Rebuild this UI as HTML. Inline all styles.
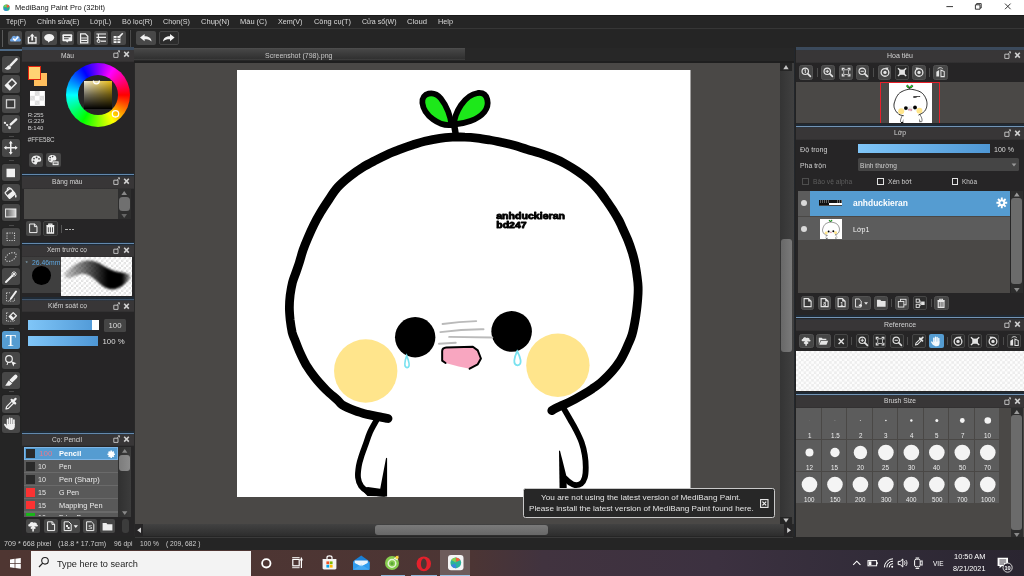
<!DOCTYPE html><html><head><meta charset="utf-8"><title>MediBang Paint Pro</title><style>
html,body{margin:0;padding:0;background:#252525;}
body{width:1024px;height:576px;overflow:hidden;position:relative;font-family:"Liberation Sans",sans-serif;}
div{position:absolute;box-sizing:border-box;}
.t{position:absolute;white-space:nowrap;line-height:1;font-family:"Liberation Sans",sans-serif;}
svg{position:absolute;left:0;top:0;overflow:visible;}
.btn{background:#4a4a4a;border-radius:2px;border:1px solid #3a3a3a;}
#root{left:0;top:0;width:1024px;height:576px;overflow:hidden;transform:translateZ(0);will-change:transform;background:#252525;}
</style></head><body><div id="root">
<div style="left:0px;top:0px;width:1024px;height:15px;background:#ffffff;"></div>
<svg style="left:2px;top:2.5px" width="11" height="11" viewBox="0 0 11 11"><circle cx="4.5" cy="4.7" r="3.3" fill="#27b08f"/><path d="M4.5,1.4 A3.3,3.3 0 0 1 7.6,3.6 L5,5 Z" fill="#ef5a3a"/><path d="M1.5,6 A3.3,3.3 0 0 0 5,8 L4.4,5.2 Z" fill="#3a86d9"/><path d="M1.6,3.2 A3.3,3.3 0 0 1 4.5,1.4 L4.5,4.6 Z" fill="#8ccf4c"/></svg>
<span class="t" style="left:15px;top:3.65px;font-size:7.5px;color:#111;transform-origin:0 0;transform:scaleX(0.9994);">MediBang Paint Pro (32bit)</span>
<svg style="left:940px;top:0px" width="84" height="15" viewBox="0 0 84 15"><path d="M6.4,6.6 H13" stroke="#222" stroke-width=".9"/><path d="M35.4,4.8 V9.2 H40 V4.8 Z M36.6,4.8 V3.6 H41.2 V8 H40" fill="none" stroke="#222" stroke-width=".9"/><path d="M65,3.6 L70.6,9.2 M70.6,3.6 L65,9.2" stroke="#222" stroke-width=".9"/></svg>
<div style="left:0px;top:14.7px;width:1024px;height:13.3px;background:#252525;border-top:1px solid #1a1a1a;"></div>
<span class="t" style="left:6px;top:17.8px;font-size:7.8px;color:#dadada;transform-origin:0 0;transform:scaleX(0.8547);">Tệp(F)</span>
<span class="t" style="left:36.5px;top:17.8px;font-size:7.8px;color:#dadada;transform-origin:0 0;transform:scaleX(0.9159);">Chỉnh sửa(E)</span>
<span class="t" style="left:90px;top:17.8px;font-size:7.8px;color:#dadada;transform-origin:0 0;transform:scaleX(0.9004);">Lớp(L)</span>
<span class="t" style="left:121.5px;top:17.8px;font-size:7.8px;color:#dadada;transform-origin:0 0;transform:scaleX(0.9383);">Bộ lọc(R)</span>
<span class="t" style="left:163px;top:17.8px;font-size:7.8px;color:#dadada;transform-origin:0 0;transform:scaleX(0.9296);">Chọn(S)</span>
<span class="t" style="left:200.5px;top:17.8px;font-size:7.8px;color:#dadada;transform-origin:0 0;transform:scaleX(0.9669);">Chụp(N)</span>
<span class="t" style="left:240px;top:17.8px;font-size:7.8px;color:#dadada;transform-origin:0 0;transform:scaleX(0.9586);">Màu (C)</span>
<span class="t" style="left:278px;top:17.8px;font-size:7.8px;color:#dadada;transform-origin:0 0;transform:scaleX(0.9268);">Xem(V)</span>
<span class="t" style="left:313.5px;top:17.8px;font-size:7.8px;color:#dadada;transform-origin:0 0;transform:scaleX(0.9484);">Công cụ(T)</span>
<span class="t" style="left:361.5px;top:17.8px;font-size:7.8px;color:#dadada;transform-origin:0 0;transform:scaleX(0.9043);">Cửa sổ(W)</span>
<span class="t" style="left:406.5px;top:17.8px;font-size:7.8px;color:#dadada;transform-origin:0 0;transform:scaleX(0.9812);">Cloud</span>
<span class="t" style="left:437.5px;top:17.8px;font-size:7.8px;color:#dadada;transform-origin:0 0;transform:scaleX(0.9349);">Help</span>
<div style="left:0px;top:28px;width:1024px;height:20px;background:#252525;border-top:1px solid #363636;"></div>
<div style="left:2px;top:29.5px;width:1px;height:17.5px;background:#5a5a5a;"></div>
<div style="left:129px;top:29.5px;width:1px;height:17.5px;background:#1a1a1a;"></div>
<div style="left:130.4px;top:29.5px;width:1px;height:17.5px;background:#4a4a4a;"></div>
<div style="left:8.0px;top:30.8px;width:14.4px;height:14.5px;background:#484848;border-radius:2px;"></div>
<div style="left:25.2px;top:30.8px;width:14.4px;height:14.5px;background:#484848;border-radius:2px;"></div>
<div style="left:42.4px;top:30.8px;width:14.4px;height:14.5px;background:#484848;border-radius:2px;"></div>
<div style="left:59.6px;top:30.8px;width:14.4px;height:14.5px;background:#484848;border-radius:2px;"></div>
<div style="left:76.8px;top:30.8px;width:14.4px;height:14.5px;background:#484848;border-radius:2px;"></div>
<div style="left:94.0px;top:30.8px;width:14.4px;height:14.5px;background:#484848;border-radius:2px;"></div>
<div style="left:111.2px;top:30.8px;width:14.4px;height:14.5px;background:#484848;border-radius:2px;"></div>
<svg style="left:8.0px;top:30.8px" width="14.4" height="14.5" viewBox="0 0 14.4 14.5"><path d="M3.4,10.6 C1.6,10.4 1.6,7.6 3.6,7.4 C3.6,5 6.2,4 7.6,5.4 C9.4,3.8 12.2,5.2 11.6,7.4 C13.4,7.6 13.2,10.6 11.4,10.6 Z" fill="#6fa6e6"/><path d="M5.2,7.6 L7,9.4 L10.2,5.8" fill="none" stroke="#fff" stroke-width="1.5"/></svg>
<svg style="left:25.2px;top:30.8px" width="14.4" height="14.5" viewBox="0 0 14.4 14.5"><path d="M5,6.4 H3.4 V12 H11 V6.4 H9.4" fill="none" stroke="#f2f2f2" stroke-width="1.3"/><path d="M7.2,9.6 V4.4" stroke="#f2f2f2" stroke-width="1.8"/><path d="M4.8,5.4 L7.2,2.4 L9.6,5.4 Z" fill="#f2f2f2"/></svg>
<svg style="left:42.4px;top:30.8px" width="14.4" height="14.5" viewBox="0 0 14.4 14.5"><ellipse cx="7.2" cy="6.6" rx="5" ry="3.6" fill="#f2f2f2"/><path d="M5.6,9 L6.2,11.8 L8.6,9.4 Z" fill="#f2f2f2"/></svg>
<svg style="left:59.6px;top:30.8px" width="14.4" height="14.5" viewBox="0 0 14.4 14.5"><rect x="2.4" y="3.2" width="9.8" height="7" rx="1" fill="#f2f2f2"/><path d="M6,10 L7.2,11.8 L8.4,10 Z" fill="#f2f2f2"/><path d="M4,5.6 H10.6 M4,7.8 H8.6" stroke="#484848" stroke-width="1.1"/></svg>
<svg style="left:76.8px;top:30.8px" width="14.4" height="14.5" viewBox="0 0 14.4 14.5"><path d="M3.6,2.8 H8.4 L10.8,5.2 V11.8 H3.6 Z" fill="none" stroke="#f2f2f2" stroke-width="1.2"/><path d="M4.2,7 H10.2 M4.2,9.4 H10.2" stroke="#f2f2f2" stroke-width="1.1"/></svg>
<svg style="left:94.0px;top:30.8px" width="14.4" height="14.5" viewBox="0 0 14.4 14.5"><path d="M2.4,3 H12 M2.4,6.4 H12 M4.4,3 V9.4" stroke="#f2f2f2" stroke-width="1.1" fill="none"/><circle cx="4.6" cy="10" r="1.5" fill="none" stroke="#f2f2f2" stroke-width="1"/><path d="M7,10.2 H12" stroke="#f2f2f2" stroke-width="1.2"/></svg>
<svg style="left:111.2px;top:30.8px" width="14.4" height="14.5" viewBox="0 0 14.4 14.5"><path d="M2.6,5 H9.4 V12 H2.6 Z" fill="#f2f2f2"/><path d="M2.6,7.4 H9.4 M2.6,9.7 H9.4 M6,5 V12" stroke="#484848" stroke-width=".8"/><path d="M8.6,5.4 L11.8,2.2" stroke="#f2f2f2" stroke-width="1.5"/><path d="M10.2,6.2 H11.4 V12 H10" stroke="#f2f2f2" stroke-width="0" fill="none"/></svg>
<div style="left:136.3px;top:30.8px;width:19.4px;height:14.7px;background:#484848;border-radius:2px;"></div>
<div style="left:159.2px;top:30.8px;width:19.5px;height:14.7px;background:#2c2c2c;border-radius:2px;border:1px solid #454545;"></div>
<svg style="left:136.3px;top:30.8px" width="19.4" height="14.7" viewBox="0 0 19.4 14.7"><path d="M4,6.6 L8.6,3 V5.2 C12.4,5.2 15.4,7 15.6,10.6 C14,8.6 12,8.2 8.6,8.2 V10.2 Z" fill="#f2f2f2"/></svg>
<svg style="left:159.2px;top:30.8px" width="19.5" height="14.7" viewBox="0 0 19.5 14.7"><path d="M15.6,6.6 L11,3 V5.2 C7.2,5.2 4.2,7 4,10.6 C5.6,8.6 7.6,8.2 11,8.2 V10.2 Z" fill="#f2f2f2"/></svg>
<svg width="0" height="0"><defs><symbol id="art" viewBox="237 70 454 427" preserveAspectRatio="none"><rect x="237" y="70" width="454" height="427" fill="#fff"/><circle cx="365.8" cy="371" r="31.7" fill="#ffe58c"/><circle cx="558.1" cy="365.2" r="31.7" fill="#ffe58c"/><path d="M388.1,418.5 C386.8,418.2 383.4,417.6 380.0,416.9 C376.6,416.2 371.7,415.4 367.5,414.4 C363.3,413.3 359.2,412.2 355.0,410.6 C350.8,409.0 345.4,406.8 342.5,405.0 C339.6,403.2 340.2,402.5 337.5,400.0 C334.8,397.5 330.0,393.8 326.2,390.0 C322.5,386.2 318.3,381.7 315.0,377.5 C311.7,373.3 308.8,369.2 306.2,365.0 C303.8,360.8 301.9,356.7 300.0,352.5 C298.1,348.3 296.3,343.3 295.0,340.0 C293.7,336.7 293.0,335.8 292.2,332.5 C291.5,329.2 290.7,324.2 290.2,320.0 C289.8,315.8 289.4,311.7 289.4,307.5 C289.4,303.3 289.7,299.2 290.2,295.0 C290.8,290.8 291.5,286.5 292.5,282.5 C293.5,278.5 295.4,274.3 296.5,271.0 C297.6,267.7 298.3,266.0 299.4,262.5 C300.5,259.0 301.7,254.2 303.1,250.0 C304.6,245.8 306.3,241.7 308.1,237.5 C309.9,233.3 311.7,229.2 313.8,225.0 C315.8,220.8 318.2,216.5 320.6,212.5 C323.0,208.5 325.2,205.2 328.0,201.0 C330.8,196.8 333.8,191.6 337.5,187.5 C341.2,183.4 345.8,179.5 350.0,176.2 C354.2,172.9 358.3,170.1 362.5,167.5 C366.7,164.9 370.8,162.8 375.0,160.6 C379.2,158.4 383.3,156.3 387.5,154.4 C391.7,152.5 395.8,151.0 400.0,149.4 C404.2,147.8 408.3,146.3 412.5,145.0 C416.7,143.7 420.4,142.4 425.0,141.3 C429.6,140.2 435.4,139.0 440.0,138.3 C444.6,137.6 448.3,137.4 452.5,137.2 C456.7,137.0 460.8,136.9 465.0,137.1 C469.2,137.2 473.3,137.6 477.5,138.1 C481.7,138.6 485.8,139.3 490.0,140.0 C494.2,140.7 498.3,141.6 502.5,142.5 C506.7,143.4 510.8,144.4 515.0,145.6 C519.2,146.8 523.3,148.2 527.5,149.4 C531.7,150.7 535.8,151.7 540.0,153.1 C544.2,154.5 548.3,156.0 552.5,157.7 C556.7,159.4 560.8,161.2 565.0,163.5 C569.2,165.8 573.3,168.3 577.5,171.2 C581.7,174.0 586.5,177.5 590.0,180.6 C593.5,183.7 596.0,186.8 598.8,190.0 C601.5,193.2 603.8,196.5 606.2,200.0 C608.8,203.5 611.6,207.9 613.8,211.2 C615.9,214.6 617.5,217.3 619.0,220.0 C620.5,222.7 621.0,224.2 622.5,227.5 C624.0,230.8 626.4,235.8 628.1,240.0 C629.8,244.2 631.2,248.3 632.5,252.5 C633.8,256.7 634.8,260.8 635.6,265.0 C636.4,269.2 637.0,273.8 637.5,277.5 C638.0,281.2 638.3,283.7 638.4,287.0 C638.5,290.3 638.4,293.7 638.1,297.5 C637.9,301.3 637.4,305.8 636.9,310.0 C636.4,314.2 635.8,318.3 635.0,322.5 C634.2,326.7 633.4,331.2 632.2,335.0 C631.1,338.8 629.5,341.8 628.1,345.0 C626.7,348.2 625.4,351.3 624.0,354.0 C622.6,356.7 621.9,358.4 620.0,361.2 C618.1,364.1 615.4,367.9 612.5,371.2 C609.6,374.6 605.8,378.3 602.5,381.2 C599.2,384.2 595.8,386.5 592.5,388.8 C589.2,391.0 586.2,392.8 582.5,395.0 C578.8,397.2 574.2,399.8 570.0,401.9 C565.8,404.0 560.5,406.1 557.5,407.5 C554.5,408.9 552.9,410.1 552.0,410.6" fill="none" stroke="#000" stroke-width="8.8" stroke-linecap="round" stroke-linejoin="round"/><path d="M377.0,419.5 C375.8,421.7 371.9,428.2 370.0,432.5 C368.1,436.8 366.9,441.2 365.5,445.0 C364.1,448.8 363.0,451.5 361.9,455.0 C360.8,458.5 359.5,462.2 358.9,466.0 C358.3,469.8 357.7,474.1 358.1,477.5 C358.5,480.9 359.7,484.0 361.2,486.2 C362.8,488.5 365.2,490.1 367.5,491.2 C369.8,492.4 372.2,492.6 375.0,493.0 C377.8,493.4 382.5,493.7 384.0,493.8" fill="none" stroke="#000" stroke-width="5.8" stroke-linecap="round" stroke-linejoin="round"/><path d="M386.2,457.8 L387.2,458.2 L387.2,496.6 L367.5,496 L361,489 L368,487 L380.3,488.8 Z" fill="#000"/><path d="M562.5,406.0 C563.1,407.0 564.6,409.7 566.0,412.0 C567.4,414.3 568.9,417.0 570.6,420.0 C572.3,423.0 574.4,426.2 576.2,430.0 C578.1,433.8 580.4,438.3 581.9,442.5 C583.4,446.7 584.3,450.8 585.0,455.0 C585.7,459.2 586.0,463.8 586.0,467.5 C586.0,471.2 585.8,474.8 585.0,477.5 C584.2,480.2 583.0,482.4 581.3,483.7 C579.6,484.9 576.9,485.2 575.0,485.0 C573.1,484.8 571.6,483.6 570.0,482.5 C568.4,481.4 566.2,479.2 565.5,478.5" fill="none" stroke="#000" stroke-width="5.8" stroke-linecap="round" stroke-linejoin="round"/><path d="M559.2,450.4 L560.3,451 L566.6,476 L567,490 L559.8,490 Z" fill="#000"/><path d="M451.5,125 C440,126.5 424,116 422.5,103 C421.5,92.5 434,90 441,98.5 C447,106 451,117 451.5,125 Z" fill="#1de81a" stroke="#000" stroke-width="5.8" stroke-linejoin="round"/><path d="M454,124.5 C455,113 464,95 478,93 C489,92 490,105 484.5,112 C478,120 464,124 454,124.5 Z" fill="#1de81a" stroke="#000" stroke-width="5.8" stroke-linejoin="round"/><path d="M453.8,122 L456,135" stroke="#000" stroke-width="6.5" stroke-linecap="butt"/><circle cx="415.3" cy="337.2" r="20.2" fill="#000"/><circle cx="511.8" cy="331.4" r="20.3" fill="#000"/><g stroke="#bababa" stroke-width="1.9" stroke-linecap="round" fill="none"><path d="M442.7,324 Q458.8,321.6 476.4,321.1"/><path d="M440.5,332.1 Q463,329 483.7,329.2"/><path d="M449.3,336.9 L492.5,337.5"/><path d="M439.1,343.8 L455.9,342.8"/></g><path d="M442.3,351 Q442.5,348 446.4,347.6 L473,346.7 L477.9,350.4 L481.1,358.5 L477.9,364.3 L469.8,368.7 L458.8,366.6 L445.7,363 L442.3,360.7 Z" fill="#f8a6c0"/><path d="M469.8,368.7 L477.9,364.3 L481.1,358.5 L477.9,350.4 L473,346.7 L446.4,347.6 Q442.5,348 442.3,351 L442.3,360.7 L445.7,363" fill="none" stroke="#000" stroke-width="2" stroke-linejoin="round" stroke-linecap="round"/><path d="M406.8,355.6 C405,361 403.6,367.2 407.2,367.6 C410.8,367.2 409,361 406.8,355.6 Z" fill="#fff" stroke="#79e2f0" stroke-width="1.6"/><path d="M517.4,351.2 C514.6,357 512.4,364.8 517.8,365.3 C523.2,364.8 520.4,357 517.4,351.2 Z" fill="#fff" stroke="#79e2f0" stroke-width="1.8"/><g font-family="Liberation Sans" font-weight="bold" font-size="9.6" fill="#000" stroke="#000" stroke-width="0.9" stroke-linejoin="round"><text x="496.4" y="219" textLength="68.8" lengthAdjust="spacingAndGlyphs">anhduckieran</text><text x="496.4" y="227.8" textLength="30.4" lengthAdjust="spacingAndGlyphs">bd247</text></g></symbol></defs></svg>
<div style="left:133px;top:48px;width:663px;height:490px;background:#282828;"></div>
<div style="left:135px;top:62.8px;width:645.3px;height:461.4px;background:#4a4846;"></div>
<div style="left:134px;top:48px;width:662px;height:14.8px;background:#272727;"></div>
<div style="left:134px;top:48.4px;width:330.5px;height:12px;background:linear-gradient(#505050 0%,#454545 14%,#3b3b3b 50%,#313131 88%,#414141 100%);"></div>
<div style="left:134px;top:61.4px;width:662px;height:1.4px;background:#1f1f1f;"></div>
<span class="t" style="left:264.75px;top:52.17px;font-size:7.6px;color:#c9c9c9;transform-origin:0 0;transform:scaleX(0.9234);">Screenshot (798).png</span>
<svg style="left:237px;top:70px" width="453.7" height="427"><use href="#art" x="0" y="0" width="453.7" height="427"/></svg>
<div style="left:780.3px;top:62.8px;width:13.4px;height:461.4px;background:linear-gradient(90deg,#343434,#404040);"></div>
<div style="left:780.3px;top:62.8px;width:12px;height:8px;background:#252525;"></div>
<div style="left:780.3px;top:516.5px;width:12px;height:7.7px;background:#252525;"></div>
<div style="left:781px;top:239px;width:11px;height:113px;background:linear-gradient(90deg,#686868,#7a7a7a);border-radius:3px;"></div>
<svg style="left:780.3px;top:62.8px" width="12" height="462" viewBox="0 0 12 462"><path d="M6,1.9 L8.7,6.2 H3.3 Z" fill="#c4c4c4"/><path d="M6,459.6 L8.7,455.6 H3.3 Z" fill="#c4c4c4"/></svg>
<div style="left:793.7px;top:48px;width:2.4px;height:490px;background:#23272c;"></div>
<div style="left:135px;top:524.2px;width:657.3px;height:11.6px;background:linear-gradient(#424242,#2d2d2d);"></div>
<div style="left:135px;top:524.2px;width:8.4px;height:11.6px;background:#262526;"></div>
<div style="left:783.8px;top:524.2px;width:8.5px;height:11.6px;background:#262526;"></div>
<div style="left:375px;top:525.2px;width:173px;height:10.2px;background:linear-gradient(#7a7a7a,#676767);border-radius:3px;"></div>
<svg style="left:135px;top:524.2px" width="660" height="12" viewBox="0 0 660 12"><path d="M2.2,6.3 L6,3.6 V9 Z" fill="#d0d0d0"/><path d="M656,6.3 L652.2,3.6 V9 Z" fill="#d0d0d0"/></svg>
<div style="left:522.6px;top:488.4px;width:252.4px;height:29.6px;background:#272727;border:1px solid #c9c9c9;border-radius:2.5px;"></div>
<span class="t" style="left:541px;top:494.21px;font-size:7.9px;color:#e4e4e4;transform-origin:0 0;transform:scaleX(1.0414);">You are not using the latest version of MediBang Paint.</span>
<span class="t" style="left:528.7px;top:504.51px;font-size:7.9px;color:#e4e4e4;transform-origin:0 0;transform:scaleX(1.0352);">Please install the latest version of MediBang Paint found here.</span>
<svg style="left:760.2px;top:498.6px" width="8.6" height="9" viewBox="0 0 8.6 9"><rect x=".6" y=".6" width="7.4" height="7.8" fill="none" stroke="#eee" stroke-width="1.1"/><path d="M2.4,2.6 L6.2,6.4 M6.2,2.6 L2.4,6.4" stroke="#eee" stroke-width="1.3"/></svg>
<div style="left:0px;top:48px;width:22px;height:490px;background:#252525;"></div>
<div style="left:0px;top:49px;width:22px;height:1.5px;background:#4e6a86;"></div>
<div style="left:2.3px;top:55.5px;width:17.7px;height:17.5px;background:#474747;border-radius:2.5px;box-shadow:0 0 0 1px #232323;"></div>
<svg style="left:2.3px;top:55.5px" width="17.5" height="17.5" viewBox="0 0 17.5 17.5"><path d="M14.6,3.2 L8.4,9.6" stroke="#f0f0f0" stroke-width="2.4" stroke-linecap="round"/><path d="M2.6,12.4 C4.6,12 5,9.8 6.6,9.2 L9,11.4 C8.6,13.6 5.4,14.6 2.6,12.4 Z" fill="#f0f0f0"/></svg>
<div style="left:2.3px;top:75px;width:17.7px;height:17.5px;background:#474747;border-radius:2.5px;box-shadow:0 0 0 1px #232323;"></div>
<svg style="left:2.3px;top:75px" width="17.5" height="17.5" viewBox="0 0 17.5 17.5"><path d="M3.5,10.5 L10,4 L14.2,8.2 L7.7,14.7 Z" fill="none" stroke="#f0f0f0" stroke-width="1.6" stroke-linejoin="round"/><path d="M3.5,10.5 L5.8,8.2 L10,12.4 L7.7,14.7 Z" fill="#f0f0f0"/></svg>
<div style="left:2.3px;top:95px;width:17.7px;height:17.5px;background:#474747;border-radius:2.5px;box-shadow:0 0 0 1px #232323;"></div>
<svg style="left:2.3px;top:95px" width="17.5" height="17.5" viewBox="0 0 17.5 17.5"><rect x="4.5" y="4.8" width="8.2" height="8" fill="#3a3a3a" stroke="#d0d0d0" stroke-width="1.3"/></svg>
<div style="left:2.3px;top:115px;width:17.7px;height:17.5px;background:#474747;border-radius:2.5px;box-shadow:0 0 0 1px #232323;"></div>
<svg style="left:2.3px;top:115px" width="17.5" height="17.5" viewBox="0 0 17.5 17.5"><path d="M14.2,4.4 L8.8,9.4" stroke="#f0f0f0" stroke-width="2.4" stroke-linecap="round"/><path d="M2.9,7.8 L7.6,12.7" stroke="#bbb" stroke-width=".8"/><circle cx="2.9" cy="7.8" r="1.15" fill="#f0f0f0"/><circle cx="5.2" cy="10.1" r="1.1" fill="#f0f0f0"/><circle cx="7.6" cy="12.7" r="1.45" fill="#f0f0f0"/></svg>
<div style="left:2.3px;top:139px;width:17.7px;height:17.5px;background:#474747;border-radius:2.5px;box-shadow:0 0 0 1px #232323;"></div>
<svg style="left:2.3px;top:139px" width="17.5" height="17.5" viewBox="0 0 17.5 17.5"><path d="M8.75,3.2 V14.3 M3.2,8.75 H14.3" stroke="#f0f0f0" stroke-width="1.5"/><path d="M8.75,1.8 L10.7,4.4 H6.8 Z M8.75,15.7 L10.7,13.1 H6.8 Z M1.8,8.75 L4.4,6.8 V10.7 Z M15.7,8.75 L13.1,6.8 V10.7 Z" fill="#f0f0f0"/></svg>
<div style="left:2.3px;top:163.5px;width:17.7px;height:17.5px;background:#474747;border-radius:2.5px;box-shadow:0 0 0 1px #232323;"></div>
<svg style="left:2.3px;top:163.5px" width="17.5" height="17.5" viewBox="0 0 17.5 17.5"><rect x="4.5" y="4.7" width="8.5" height="8.5" fill="#f0f0f0"/></svg>
<div style="left:2.3px;top:183.5px;width:17.7px;height:17.5px;background:#474747;border-radius:2.5px;box-shadow:0 0 0 1px #232323;"></div>
<svg style="left:2.3px;top:183.5px" width="17.5" height="17.5" viewBox="0 0 17.5 17.5"><g transform="rotate(-40 8 9.4)"><rect x="4.4" y="5.6" width="7.4" height="7.6" rx=".8" fill="none" stroke="#f0f0f0" stroke-width="1.2"/><rect x="4.4" y="9" width="7.4" height="4.2" fill="#f0f0f0"/></g><path d="M5.4,7 C4.6,3.4 8,2.6 8.6,5.4" fill="none" stroke="#f0f0f0" stroke-width="1.1"/><path d="M13.6,9.6 C14.9,11.8 15,13.8 13.8,13.8 C12.6,13.8 12.8,11.8 13.6,9.6 Z" fill="#f0f0f0"/></svg>
<div style="left:2.3px;top:203.5px;width:17.7px;height:17.5px;background:#474747;border-radius:2.5px;box-shadow:0 0 0 1px #232323;"></div>
<svg style="left:2.3px;top:203.5px" width="17.5" height="17.5" viewBox="0 0 17.5 17.5"><defs><linearGradient id="gg" x1="0" x2="1"><stop offset="0" stop-color="#555"/><stop offset="1" stop-color="#ddd"/></linearGradient></defs><rect x="3.6" y="5" width="10.3" height="8" fill="url(#gg)" stroke="#f0f0f0" stroke-width="1"/></svg>
<div style="left:2.3px;top:228px;width:17.7px;height:17.5px;background:#474747;border-radius:2.5px;box-shadow:0 0 0 1px #232323;"></div>
<svg style="left:2.3px;top:228px" width="17.5" height="17.5" viewBox="0 0 17.5 17.5"><rect x="5" y="5" width="7.5" height="7.5" fill="none" stroke="#c6c6c6" stroke-width="1.1" stroke-dasharray="1.2 1.2"/></svg>
<div style="left:2.3px;top:248px;width:17.7px;height:17.5px;background:#474747;border-radius:2.5px;box-shadow:0 0 0 1px #232323;"></div>
<svg style="left:2.3px;top:248px" width="17.5" height="17.5" viewBox="0 0 17.5 17.5"><ellipse cx="8.75" cy="9" rx="6" ry="3.6" transform="rotate(-32 8.75 9)" fill="none" stroke="#c6c6c6" stroke-width="1.1" stroke-dasharray="1.2 1.3"/></svg>
<div style="left:2.3px;top:267.5px;width:17.7px;height:17.5px;background:#474747;border-radius:2.5px;box-shadow:0 0 0 1px #232323;"></div>
<svg style="left:2.3px;top:267.5px" width="17.5" height="17.5" viewBox="0 0 17.5 17.5"><path d="M4,14 L10.5,7.5" stroke="#f0f0f0" stroke-width="2" stroke-linecap="round"/><path d="M12,3 V9 M9,6 H15 M10,4 L14,8 M14,4 L10,8" stroke="#f0f0f0" stroke-width="0.8"/></svg>
<div style="left:2.3px;top:287.5px;width:17.7px;height:17.5px;background:#474747;border-radius:2.5px;box-shadow:0 0 0 1px #232323;"></div>
<svg style="left:2.3px;top:287.5px" width="17.5" height="17.5" viewBox="0 0 17.5 17.5"><path d="M4.5,4.8 H9 M4.5,4.8 V13.2 H12.5 V10" fill="none" stroke="#c0c0c0" stroke-width="1" stroke-dasharray="1.2 1.2"/><path d="M14,3.5 L9,10.5" stroke="#f0f0f0" stroke-width="2" stroke-linecap="round"/><path d="M8.2,11.8 L9.8,9.6 L7.6,12.6 Z" fill="#f0f0f0" stroke="#f0f0f0" stroke-width=".6"/></svg>
<div style="left:2.3px;top:307.5px;width:17.7px;height:17.5px;background:#474747;border-radius:2.5px;box-shadow:0 0 0 1px #232323;"></div>
<svg style="left:2.3px;top:307.5px" width="17.5" height="17.5" viewBox="0 0 17.5 17.5"><path d="M4.5,4.8 H7 M4.5,4.8 V13.2 H12.5 V12" fill="none" stroke="#c0c0c0" stroke-width="1" stroke-dasharray="1.2 1.2"/><path d="M7.2,8.6 L11.2,4.6 L14.4,7.8 L10.4,11.8 Z" fill="none" stroke="#f0f0f0" stroke-width="1.3" stroke-linejoin="round"/><path d="M7.2,8.6 L8.8,7 L12,10.2 L10.4,11.8 Z" fill="#f0f0f0"/></svg>
<div style="left:2.3px;top:331px;width:17.7px;height:17.5px;background:#559cd1;border-radius:2.5px;box-shadow:0 0 0 1px #232323;"></div>
<svg style="left:2.3px;top:331px" width="17.5" height="17.5" viewBox="0 0 17.5 17.5"><text x="8.75" y="14.8" font-family="Liberation Serif" font-size="17" fill="#fff" text-anchor="middle">T</text></svg>
<div style="left:2.3px;top:351.5px;width:17.7px;height:17.5px;background:#474747;border-radius:2.5px;box-shadow:0 0 0 1px #232323;"></div>
<svg style="left:2.3px;top:351.5px" width="17.5" height="17.5" viewBox="0 0 17.5 17.5"><circle cx="7" cy="7" r="3.3" fill="none" stroke="#f0f0f0" stroke-width="1.2"/><path d="M9,9 L14.5,11.2 L12.2,12.2 L11.4,14.6 Z" fill="#f0f0f0"/><path d="M6,10.2 L5,13" stroke="#f0f0f0" stroke-width="1"/></svg>
<div style="left:2.3px;top:371.5px;width:17.7px;height:17.5px;background:#474747;border-radius:2.5px;box-shadow:0 0 0 1px #232323;"></div>
<svg style="left:2.3px;top:371.5px" width="17.5" height="17.5" viewBox="0 0 17.5 17.5"><path d="M13.6,4.6 L9,9.2" stroke="#f0f0f0" stroke-width="3.8" stroke-linecap="round"/><path d="M3.2,13.8 L6.6,8.4 L10.2,11.6 L7.6,13.8 Z" fill="#f0f0f0"/><path d="M6.9,8.1 L10.5,11.3" stroke="#474747" stroke-width=".7"/></svg>
<div style="left:2.3px;top:395px;width:17.7px;height:17.5px;background:#474747;border-radius:2.5px;box-shadow:0 0 0 1px #232323;"></div>
<svg style="left:2.3px;top:395px" width="17.5" height="17.5" viewBox="0 0 17.5 17.5"><path d="M4,14 L4.6,11.6 L10,6.2 L11.8,8 L6.4,13.4 Z" fill="none" stroke="#f0f0f0" stroke-width="1.2" stroke-linejoin="round"/><path d="M9.6,4.8 L13.2,8.4 M11,6.5 L13.6,3.9" stroke="#f0f0f0" stroke-width="2.2" stroke-linecap="round"/></svg>
<div style="left:2.3px;top:415px;width:17.7px;height:17.5px;background:#474747;border-radius:2.5px;box-shadow:0 0 0 1px #232323;"></div>
<svg style="left:2.3px;top:415px" width="17.5" height="17.5" viewBox="0 0 17.5 17.5"><path d="M5.6,9.5 V4.6 M7.7,8.8 V3.3 M9.8,8.8 V3.6 M11.9,9.5 V5" stroke="#f0f0f0" stroke-width="1.7" stroke-linecap="round"/><path d="M4.8,9 H12.8 V11.5 C12.8,14 11,15 9,15 C6.8,15 5.6,13.8 4.8,12 Z" fill="#f0f0f0"/><path d="M5.2,12.6 L3,9.6" stroke="#f0f0f0" stroke-width="1.8" stroke-linecap="round"/></svg>
<div style="left:8.5px;top:136px;width:5.5px;height:1px;background:#4a4a4a;"></div>
<div style="left:8.5px;top:160px;width:5.5px;height:1px;background:#4a4a4a;"></div>
<div style="left:8.5px;top:224.5px;width:5.5px;height:1px;background:#4a4a4a;"></div>
<div style="left:8.5px;top:328px;width:5.5px;height:1px;background:#4a4a4a;"></div>
<div style="left:8.5px;top:391px;width:5.5px;height:1px;background:#4a4a4a;"></div>
<div style="left:22px;top:48px;width:112px;height:490px;background:#262526;"></div>
<div style="left:22px;top:49px;width:112px;height:13px;background:linear-gradient(#2c3540 0%,#383637 12%,#383637 90%,#2e2d2e 100%);"></div>
<span class="t" style="left:60.8px;top:51.83px;font-size:8px;color:#d4d4d4;transform-origin:0 0;transform:scaleX(0.8353);">Màu</span>
<svg style="left:112px;top:50.3px" width="20" height="9" viewBox="0 0 20 9"><path d="M1.8,3.2 H6 V7.4 H1.8 Z" fill="none" stroke="#bdbdbd" stroke-width="1"/><path d="M4.8,3.4 L7.3,1 M5.9,0.8 H7.5 V2.4" fill="none" stroke="#bdbdbd" stroke-width="0.9"/><path d="M12.2,1.8 L16.8,6.6 M16.8,1.8 L12.2,6.6" stroke="#d0d0d0" stroke-width="1.6"/></svg>
<div style="left:22px;top:47.4px;width:112px;height:2.8px;background:#3b4a5c;"></div>
<div style="left:33.6px;top:73px;width:13px;height:13px;background:#ffbf5e;"></div>
<div style="left:27.7px;top:66px;width:13.8px;height:14px;background:#ffd373;border:1.6px solid #e3260f;"></div>
<div style="left:29.5px;top:91px;width:15.3px;height:14.8px;background:#fff;background-image:linear-gradient(45deg,#ddd 25%,transparent 25%,transparent 75%,#ddd 75%),linear-gradient(45deg,#ddd 25%,transparent 25%,transparent 75%,#ddd 75%);background-size:9.6px 9.6px;background-position:0 0,4.8px 4.8px;"></div>
<span class="t" style="left:27.7px;top:111.5px;font-size:6px;color:#cfcfcf;">R:255</span>
<span class="t" style="left:27.7px;top:118.3px;font-size:6px;color:#cfcfcf;">G:229</span>
<span class="t" style="left:27.7px;top:125.1px;font-size:6px;color:#cfcfcf;">B:140</span>
<span class="t" style="left:27.7px;top:137px;font-size:6.3px;color:#cfcfcf;">#FFE58C</span>
<div style="left:66px;top:63.2px;width:64.2px;height:64.2px;background:conic-gradient(from 90deg,#f00,#ff0,#0f0,#0ff,#00f,#f0f,#f00);border-radius:50%;"></div>
<div style="left:78.1px;top:75.3px;width:40px;height:40px;background:#262526;border-radius:50%;"></div>
<div style="left:83.8px;top:80.5px;width:28.3px;height:28.3px;background:linear-gradient(to bottom,rgba(0,0,0,0) 0%,rgba(0,0,0,.55) 50%,#000 100%),linear-gradient(to right,#f6f0d8,#e6ba12);"></div>
<svg style="left:60px;top:58px" width="76" height="76" viewBox="0 0 76 76"><circle cx="55.5" cy="55.8" r="3.2" fill="none" stroke="#fff" stroke-width="1.3"/><clipPath id="svc"><rect x="23.8" y="22.6" width="28.3" height="28.3"/></clipPath><circle cx="36.4" cy="22.8" r="3" fill="rgba(255,255,255,.35)" stroke="#fff" stroke-width="1.2" clip-path="url(#svc)"/></svg>
<div style="left:29px;top:153.2px;width:14.4px;height:14.2px;background:#474747;border-radius:2px;"></div>
<div style="left:46.2px;top:153.2px;width:14.4px;height:14.2px;background:#474747;border-radius:2px;"></div>
<svg style="left:29px;top:153.2px" width="14.4" height="14.2" viewBox="0 0 14.4 14.2"><path d="M7.2,2.6 C3.5,2.6 2.2,5.5 2.4,7.6 C2.6,10.4 5,11.8 7,11.4 C8.6,11 7.6,9.4 8.8,9 C10.2,8.6 12.2,9.4 12.2,6.6 C12.2,4 10,2.6 7.2,2.6 Z" fill="#f0f0f0"/><circle cx="5" cy="5.6" r=".9" fill="#474747"/><circle cx="7.6" cy="4.4" r=".9" fill="#474747"/><circle cx="10" cy="5.8" r=".9" fill="#474747"/><circle cx="4.6" cy="8.4" r=".9" fill="#474747"/></svg>
<svg style="left:46.2px;top:153.2px" width="14.4" height="14.2" viewBox="0 0 14.4 14.2"><path d="M6.2,2 C3,2 1.9,4.4 2.1,6.2 C2.3,8.6 4.2,9.6 6,9.4 C7,9 6.4,7.9 7.4,7.6 C8.6,7.2 10.4,7.8 10.4,5.4 C10.4,3.2 8.6,2 6.2,2 Z" fill="#f0f0f0"/><circle cx="4.2" cy="4.6" r=".8" fill="#474747"/><circle cx="6.6" cy="3.6" r=".8" fill="#474747"/><circle cx="4" cy="7" r=".8" fill="#474747"/><rect x="6.6" y="8.4" width="6" height="3.8" fill="#f0f0f0"/><rect x="7.6" y="9.4" width="4" height="1.8" fill="#777"/></svg>
<div style="left:22px;top:172.5px;width:112px;height:3px;background:#1f2a35;"></div>
<div style="left:22px;top:174.2px;width:112px;height:1.1px;background:#6288ad;"></div>
<div style="left:22px;top:175.5px;width:112px;height:13px;background:linear-gradient(#2c3540 0%,#383637 12%,#383637 90%,#2e2d2e 100%);"></div>
<span class="t" style="left:52.05px;top:178.33px;font-size:8px;color:#d4d4d4;transform-origin:0 0;transform:scaleX(0.8363);">Bảng màu</span>
<svg style="left:112px;top:176.8px" width="20" height="9" viewBox="0 0 20 9"><path d="M1.8,3.2 H6 V7.4 H1.8 Z" fill="none" stroke="#bdbdbd" stroke-width="1"/><path d="M4.8,3.4 L7.3,1 M5.9,0.8 H7.5 V2.4" fill="none" stroke="#bdbdbd" stroke-width="0.9"/><path d="M12.2,1.8 L16.8,6.6 M16.8,1.8 L12.2,6.6" stroke="#d0d0d0" stroke-width="1.6"/></svg>
<div style="left:24px;top:188.8px;width:93.5px;height:30.5px;background:#4b4a48;"></div>
<div style="left:118px;top:188.8px;width:13px;height:30.5px;background:#2e2e2e;"></div>
<div style="left:118.6px;top:196.5px;width:11.5px;height:14.5px;background:#707070;border-radius:3.5px;"></div>
<svg style="left:118px;top:188.8px" width="13" height="31" viewBox="0 0 13 31"><path d="M6.2,2 L9,6 H3.4 Z" fill="#888"/><path d="M6.2,29 L9,25 H3.4 Z" fill="#666"/></svg>
<div style="left:26.1px;top:221.3px;width:14.7px;height:14.6px;background:#474747;border-radius:2px;"></div>
<svg style="left:26.1px;top:221.3px" width="14.7" height="14.6" viewBox="0 0 14.7 14.6"><path d="M3.6,3 H8.6 L11,5.4 V11.6 H3.6 Z M8.4,3 V5.6 H11" fill="none" stroke="#f0f0f0" stroke-width="1"/></svg>
<div style="left:43.4px;top:221.3px;width:14.7px;height:14.6px;background:#303030;border-radius:2px;border:1px solid #454545;"></div>
<svg style="left:43.4px;top:221.3px" width="14.7" height="14.6" viewBox="0 0 14.7 14.6"><path d="M3.4,4.6 H11.3 M5.8,4.4 V3.2 H8.9 V4.4" fill="none" stroke="#f0f0f0" stroke-width="1.2"/><path d="M4.2,5.6 H10.5 V12 H4.2 Z" fill="none" stroke="#f0f0f0" stroke-width="1.3"/><path d="M6.3,6 V12 M8.4,6 V12" stroke="#f0f0f0" stroke-width="1.2"/></svg>
<div style="left:61px;top:224.5px;width:0.8px;height:8px;background:#555;"></div>
<div style="left:65.3px;top:228.6px;width:8.6px;height:1px;background:#ccc;opacity:.85"></div>
<div style="left:67.6px;top:228.6px;width:0.7px;height:1px;background:#262526;"></div>
<div style="left:70.6px;top:228.6px;width:0.7px;height:1px;background:#262526;"></div>
<div style="left:22px;top:241.5px;width:112px;height:3px;background:#1f2a35;"></div>
<div style="left:22px;top:243.2px;width:112px;height:1.1px;background:#6288ad;"></div>
<div style="left:22px;top:244.5px;width:112px;height:12px;background:linear-gradient(#2c3540 0%,#383637 12%,#383637 90%,#2e2d2e 100%);"></div>
<span class="t" style="left:47.3px;top:246.33px;font-size:8px;color:#d4d4d4;transform-origin:0 0;transform:scaleX(0.8191);">Xem trước cọ</span>
<svg style="left:112px;top:245.8px" width="20" height="9" viewBox="0 0 20 9"><path d="M1.8,3.2 H6 V7.4 H1.8 Z" fill="none" stroke="#bdbdbd" stroke-width="1"/><path d="M4.8,3.4 L7.3,1 M5.9,0.8 H7.5 V2.4" fill="none" stroke="#bdbdbd" stroke-width="0.9"/><path d="M12.2,1.8 L16.8,6.6 M16.8,1.8 L12.2,6.6" stroke="#d0d0d0" stroke-width="1.6"/></svg>
<div style="left:22px;top:256.5px;width:39px;height:36px;background:#3f3f3f;"></div>
<span class="t" style="left:25.5px;top:260px;font-size:6px;color:#8ab;">*</span>
<span class="t" style="left:32px;top:259.5px;font-size:6.8px;color:#5ea6df;">26.46mm</span>
<div style="left:32.4px;top:266.3px;width:18.8px;height:18.8px;background:#000;border-radius:50%;"></div>
<div style="left:61.2px;top:256.5px;width:71.3px;height:39.5px;background:#fff;background-image:linear-gradient(45deg,#e3e3e3 25%,transparent 25%,transparent 75%,#e3e3e3 75%),linear-gradient(45deg,#e3e3e3 25%,transparent 25%,transparent 75%,#e3e3e3 75%);background-size:5px 5px;background-position:0 0,2.5px 2.5px;overflow:hidden;"></div>
<svg style="left:61.2px;top:256.5px" width="71" height="39.5" viewBox="0 0 71 39.5"><defs><linearGradient id="bs" gradientUnits="userSpaceOnUse" x1="0" x2="71"><stop offset="0" stop-color="#000" stop-opacity=".12"/><stop offset=".2" stop-color="#000" stop-opacity=".4"/><stop offset=".45" stop-color="#000" stop-opacity=".72"/><stop offset=".66" stop-color="#000" stop-opacity="1"/><stop offset=".86" stop-color="#000" stop-opacity="1"/><stop offset="1" stop-color="#000" stop-opacity=".2"/></linearGradient><filter id="bf" x="-10%" y="-30%" width="120%" height="160%"><feGaussianBlur stdDeviation="0.8"/></filter><clipPath id="bc"><rect width="71" height="39.5"/></clipPath></defs><g clip-path="url(#bc)" filter="url(#bf)"><path d="M3.7,16.1 C4.9,15.1 8.4,11.8 10.9,10.0 C13.4,8.2 15.9,6.6 18.7,5.5 C21.5,4.4 24.6,3.5 27.6,3.5 C30.6,3.5 33.5,4.3 36.5,5.5 C39.5,6.7 42.6,9.1 45.4,10.5 C48.2,11.9 50.6,13.1 53.2,13.9 C55.8,14.7 58.6,14.9 61.0,15.5 C63.4,16.1 66.3,16.6 67.7,17.2 C69.1,17.8 69.4,18.4 69.4,19.4 C69.4,20.4 69.1,21.7 67.7,23.3 C66.3,24.9 63.4,27.4 61.0,28.9 C58.6,30.4 55.8,31.8 53.2,32.2 C50.6,32.6 47.8,32.0 45.4,31.1 C43.0,30.2 41.0,28.4 38.8,26.7 C36.6,25.0 34.1,22.6 32.1,21.1 C30.1,19.6 28.4,18.5 26.5,17.8 C24.6,17.1 22.9,16.5 20.9,16.7 C18.9,16.9 16.5,18.2 14.3,18.9 C12.1,19.6 9.4,21.0 7.6,21.1 C5.8,21.2 4.3,20.2 3.7,19.4 C3.1,18.6 3.7,16.7 3.7,16.1 Z" fill="url(#bs)"/></g></svg>
<div style="left:22px;top:297.3px;width:112px;height:3px;background:#1f2a35;"></div>
<div style="left:22px;top:299.0px;width:112px;height:1.1px;background:#6288ad;"></div>
<div style="left:22px;top:300.3px;width:112px;height:12px;background:linear-gradient(#2c3540 0%,#383637 12%,#383637 90%,#2e2d2e 100%);"></div>
<span class="t" style="left:47.8px;top:302.13px;font-size:8px;color:#d4d4d4;transform-origin:0 0;transform:scaleX(0.8434);">Kiểm soát cọ</span>
<svg style="left:112px;top:301.6px" width="20" height="9" viewBox="0 0 20 9"><path d="M1.8,3.2 H6 V7.4 H1.8 Z" fill="none" stroke="#bdbdbd" stroke-width="1"/><path d="M4.8,3.4 L7.3,1 M5.9,0.8 H7.5 V2.4" fill="none" stroke="#bdbdbd" stroke-width="0.9"/><path d="M12.2,1.8 L16.8,6.6 M16.8,1.8 L12.2,6.6" stroke="#d0d0d0" stroke-width="1.6"/></svg>
<div style="left:22px;top:298.8px;width:112px;height:1.5px;background:#40546a;"></div>
<div style="left:28.4px;top:320.1px;width:71px;height:9.8px;background:linear-gradient(90deg,#80c6f8,#4e97d5);"></div>
<div style="left:91.7px;top:320.1px;width:7.7px;height:9.8px;background:#fff;"></div>
<div style="left:104px;top:318.5px;width:22.3px;height:13.3px;background:#454545;border-radius:1.5px;"></div>
<span class="t" style="left:108.5px;top:321.5px;font-size:7.8px;color:#ddd;">100</span>
<div style="left:28.4px;top:336.1px;width:70px;height:9.8px;background:linear-gradient(90deg,#80c6f8,#4e97d5);"></div>
<span class="t" style="left:102.5px;top:337.5px;font-size:7.8px;color:#ddd;">100 %</span>
<div style="left:22px;top:431px;width:112px;height:3px;background:#1f2a35;"></div>
<div style="left:22px;top:432.7px;width:112px;height:1.1px;background:#6288ad;"></div>
<div style="left:22px;top:434px;width:112px;height:12.3px;background:linear-gradient(#2c3540 0%,#383637 12%,#383637 90%,#2e2d2e 100%);"></div>
<span class="t" style="left:52.3px;top:436.13px;font-size:8px;color:#d4d4d4;transform-origin:0 0;transform:scaleX(0.8228);">Cọ: Pencil</span>
<svg style="left:112px;top:435.3px" width="20" height="9" viewBox="0 0 20 9"><path d="M1.8,3.2 H6 V7.4 H1.8 Z" fill="none" stroke="#bdbdbd" stroke-width="1"/><path d="M4.8,3.4 L7.3,1 M5.9,0.8 H7.5 V2.4" fill="none" stroke="#bdbdbd" stroke-width="0.9"/><path d="M12.2,1.8 L16.8,6.6 M16.8,1.8 L12.2,6.6" stroke="#d0d0d0" stroke-width="1.6"/></svg>
<div style="left:24px;top:447px;width:93.7px;height:69.5px;background:#595959;"></div>
<div style="left:24px;top:447.3px;width:93.7px;height:12.85px;background:#559cd1;border:1px solid #7db5e6;"></div>
<div style="left:25.8px;top:449.2px;width:8.8px;height:8.8px;background:#2a2a2a;"></div>
<span class="t" style="left:39px;top:450.18px;font-size:7.7px;color:#e8788a;transform-origin:0 0;transform:scaleX(1.0414);">100</span>
<span class="t" style="left:58.7px;top:450.18px;font-size:7.7px;color:#fff;font-weight:bold;transform-origin:0 0;transform:scaleX(0.9831);">Pencil</span>
<div style="left:24px;top:472.1000000000001px;width:93.7px;height:0.9px;background:#6a6a6a;"></div>
<div style="left:25.8px;top:462.05px;width:8.8px;height:8.8px;background:#2a2a2a;"></div>
<span class="t" style="left:38.4px;top:463.03px;font-size:7.7px;color:#e4e4e4;transform-origin:0 0;transform:scaleX(0.9304);">10</span>
<span class="t" style="left:58.7px;top:463.03px;font-size:7.7px;color:#ececec;transform-origin:0 0;transform:scaleX(0.8976);">Pen</span>
<div style="left:24px;top:484.95000000000005px;width:93.7px;height:0.9px;background:#6a6a6a;"></div>
<div style="left:25.8px;top:474.9px;width:8.8px;height:8.8px;background:#2a2a2a;"></div>
<span class="t" style="left:38.4px;top:475.88px;font-size:7.7px;color:#e4e4e4;transform-origin:0 0;transform:scaleX(0.9304);">10</span>
<span class="t" style="left:58.7px;top:475.88px;font-size:7.7px;color:#ececec;transform-origin:0 0;transform:scaleX(0.9835);">Pen (Sharp)</span>
<div style="left:24px;top:497.80000000000007px;width:93.7px;height:0.9px;background:#6a6a6a;"></div>
<div style="left:25.8px;top:487.75px;width:8.8px;height:8.8px;background:#fb3232;"></div>
<span class="t" style="left:38.4px;top:488.73px;font-size:7.7px;color:#e4e4e4;transform-origin:0 0;transform:scaleX(0.9304);">15</span>
<span class="t" style="left:58.7px;top:488.73px;font-size:7.7px;color:#ececec;transform-origin:0 0;transform:scaleX(0.9195);">G Pen</span>
<div style="left:24px;top:510.65000000000003px;width:93.7px;height:0.9px;background:#6a6a6a;"></div>
<div style="left:25.8px;top:500.59999999999997px;width:8.8px;height:8.8px;background:#fb3232;"></div>
<span class="t" style="left:38.4px;top:501.58px;font-size:7.7px;color:#e4e4e4;transform-origin:0 0;transform:scaleX(0.9304);">15</span>
<span class="t" style="left:58.7px;top:501.58px;font-size:7.7px;color:#ececec;transform-origin:0 0;transform:scaleX(0.9605);">Mapping Pen</span>
<div style="left:24px;top:511.55px;width:93.7px;height:0.9px;background:#6a6a6a;"></div>
<div style="left:25.8px;top:513.45px;width:8.8px;height:3.0499999999999887px;background:#19b519;"></div>
<div style="left:24px;top:511.55px;width:93.7px;height:4.949999999999989px;overflow:hidden;"><span class="t" style="left:14.4px;top:2.88px;font-size:7.7px;color:#e4e4e4;transform-origin:0 0;transform:scaleX(0.9304);">10</span><span class="t" style="left:34.7px;top:2.88px;font-size:7.7px;color:#ececec;transform-origin:0 0;transform:scaleX(0.8726);">Edge Pen</span></div>
<svg style="left:107px;top:450.2px" width="8.4" height="8.4" viewBox="0 0 8.4 8.4"><circle cx="4.2" cy="4.2" r="2.7" fill="#fff"/><g stroke="#fff" stroke-width="1.5"><path d="M4.2,0.5 V7.9 M0.5,4.2 H7.9 M1.6,1.6 L6.8,6.8 M6.8,1.6 L1.6,6.8"/></g></svg>
<div style="left:118.3px;top:447px;width:12.4px;height:69.5px;background:linear-gradient(90deg,#303030,#3c3c3c);"></div>
<div style="left:119.2px;top:455px;width:10.6px;height:15.8px;background:linear-gradient(90deg,#7c7c7c,#8c8c8c);border-radius:3px;"></div>
<svg style="left:118.5px;top:447px" width="12.5" height="70" viewBox="0 0 12.5 70"><path d="M5.7,2 L8.4,5.8 H3 Z" fill="#888"/><path d="M5.7,68 L8.4,64.2 H3 Z" fill="#888"/></svg>
<div style="left:26.2px;top:519px;width:14.3px;height:14.4px;background:#474747;border-radius:2px;"></div>
<div style="left:43.7px;top:519px;width:14.3px;height:14.4px;background:#474747;border-radius:2px;"></div>
<div style="left:61.2px;top:519px;width:19px;height:14.4px;background:#474747;border-radius:2px;"></div>
<div style="left:82.6px;top:519px;width:14.5px;height:14.4px;background:#474747;border-radius:2px;"></div>
<div style="left:100px;top:519px;width:15px;height:14.4px;background:#474747;border-radius:2px;"></div>
<svg style="left:26.2px;top:519px" width="14.3" height="14.4" viewBox="0 0 14.3 14.4"><path d="M3,7.4 C1.8,7.2 2,5 3.6,5 C3.8,2.8 6.6,2.2 7.6,3.8 C9.4,3 11.2,4 10.8,5.6 C12.4,5.8 12.2,7.6 11,7.6 Z" fill="#f0f0f0"/><path d="M7.1,12.4 V7.5 M4.9,9.6 L7.1,7.2 L9.3,9.6" fill="none" stroke="#f0f0f0" stroke-width="1.6"/><path d="M7.1,11 V8" stroke="#474747" stroke-width="0"/></svg>
<svg style="left:43.7px;top:519px" width="14.3" height="14.4" viewBox="0 0 14.3 14.4"><path d="M3.6,2.8 H8.2 L10.6,5.2 V11.6 H3.6 Z M8,2.8 V5.4 H10.6" fill="none" stroke="#f0f0f0" stroke-width="1"/></svg>
<svg style="left:61.2px;top:519px" width="19" height="14.4" viewBox="0 0 19 14.4"><path d="M3.2,2.8 H7.8 L10.2,5.2 V11.6 H3.2 Z" fill="none" stroke="#f0f0f0" stroke-width="1"/><rect x="5" y="6" width="2" height="2" fill="#f0f0f0"/><rect x="6.6" y="8" width="2" height="2" fill="#f0f0f0"/><path d="M12.6,6.2 H17 L14.8,9 Z" fill="#f0f0f0"/></svg>
<svg style="left:82.6px;top:519px" width="14.5" height="14.4" viewBox="0 0 14.5 14.4"><path d="M3.6,2.8 H8.4 L10.8,5.2 V11.6 H3.6 Z" fill="none" stroke="#f0f0f0" stroke-width="1"/><text x="7.2" y="10.4" font-size="6" font-family="Liberation Sans" fill="#f0f0f0" text-anchor="middle">S</text></svg>
<svg style="left:100px;top:519px" width="15" height="14.4" viewBox="0 0 15 14.4"><path d="M2.6,4 H6.4 L7.4,5.2 H12.4 V11.4 H2.6 Z" fill="#f0f0f0"/></svg>
<div style="left:121.5px;top:519px;width:7px;height:14.4px;background:#3c3c3c;border-radius:3px;"></div>
<div style="left:795px;top:48px;width:1px;height:490px;background:#232323;"></div>
<div style="left:796px;top:48px;width:228px;height:490px;background:#262526;"></div>
<div style="left:796px;top:49px;width:228px;height:13.5px;background:linear-gradient(#2c3540 0%,#383637 12%,#383637 90%,#2e2d2e 100%);"></div>
<div style="left:796px;top:47.4px;width:228px;height:2.8px;background:#3b4a5c;"></div>
<span class="t" style="left:887.0px;top:52.13px;font-size:8px;color:#d4d4d4;transform-origin:0 0;transform:scaleX(0.8726);">Hoa tiêu</span>
<svg style="left:1003px;top:50.5px" width="20" height="9" viewBox="0 0 20 9"><path d="M1.8,3.2 H6 V7.4 H1.8 Z" fill="none" stroke="#bdbdbd" stroke-width="1"/><path d="M4.8,3.4 L7.3,1 M5.9,0.8 H7.5 V2.4" fill="none" stroke="#bdbdbd" stroke-width="0.9"/><path d="M12.2,1.8 L16.8,6.6 M16.8,1.8 L12.2,6.6" stroke="#d0d0d0" stroke-width="1.6"/></svg>
<div style="left:799.25px;top:65px;width:13.75px;height:14.5px;background:#464646;border-radius:2.5px;border:1px solid #525252;"></div>
<svg style="left:799.25px;top:65px" width="13.75" height="14.5" viewBox="0 0 13.75 14.5"><g transform="translate(6.88,7.25) scale(.92) translate(-6.88,-7.25)" opacity=".93"><circle cx="6.2" cy="6.2" r="3.5" fill="none" stroke="#f0f0f0" stroke-width="1.3"/><path d="M8.8,8.8 L11.8,11.8" stroke="#f0f0f0" stroke-width="1.8" stroke-linecap="round"/><path d="M6.3,4.2 V8.2 M5.3,5 L6.3,4.2" stroke="#f0f0f0" stroke-width="1" fill="none"/></g></svg>
<div style="left:816.5px;top:68px;width:0.9px;height:8.5px;background:#4c4c4c;"></div>
<div style="left:821px;top:65px;width:14px;height:14.5px;background:#464646;border-radius:2.5px;border:1px solid #525252;"></div>
<svg style="left:821px;top:65px" width="14" height="14.5" viewBox="0 0 14 14.5"><g transform="translate(7.00,7.25) scale(.92) translate(-7.00,-7.25)" opacity=".93"><circle cx="6.2" cy="6.2" r="3.5" fill="none" stroke="#f0f0f0" stroke-width="1.3"/><path d="M8.8,8.8 L11.8,11.8" stroke="#f0f0f0" stroke-width="1.8" stroke-linecap="round"/><path d="M4.4,6.2 H8 M6.2,4.4 V8" stroke="#f0f0f0" stroke-width="1.1"/></g></svg>
<div style="left:838.5px;top:65px;width:14.0px;height:14.5px;background:#464646;border-radius:2.5px;border:1px solid #525252;"></div>
<svg style="left:838.5px;top:65px" width="14.0" height="14.5" viewBox="0 0 14.0 14.5"><g transform="translate(7.00,7.25) scale(.92) translate(-7.00,-7.25)" opacity=".93"><path d="M3,5.4 V3 H5.4 M8.8,3 H11.2 V5.4 M11.2,8.8 V11.2 H8.8 M5.4,11.2 H3 V8.8" fill="none" stroke="#f0f0f0" stroke-width="1.3"/><rect x="4.6" y="4.6" width="5" height="5" fill="none" stroke="#f0f0f0" stroke-width=".8"/></g></svg>
<div style="left:855.5px;top:65px;width:13.75px;height:14.5px;background:#464646;border-radius:2.5px;border:1px solid #525252;"></div>
<svg style="left:855.5px;top:65px" width="13.75" height="14.5" viewBox="0 0 13.75 14.5"><g transform="translate(6.88,7.25) scale(.92) translate(-6.88,-7.25)" opacity=".93"><circle cx="6.2" cy="6.2" r="3.5" fill="none" stroke="#f0f0f0" stroke-width="1.3"/><path d="M8.8,8.8 L11.8,11.8" stroke="#f0f0f0" stroke-width="1.8" stroke-linecap="round"/><path d="M4.4,6.2 H8" stroke="#f0f0f0" stroke-width="1.1"/></g></svg>
<div style="left:873.3px;top:68px;width:0.9px;height:8.5px;background:#4c4c4c;"></div>
<div style="left:877.5px;top:65px;width:13.7px;height:14.5px;background:#464646;border-radius:2.5px;border:1px solid #525252;"></div>
<svg style="left:877.5px;top:65px" width="13.7" height="14.5" viewBox="0 0 13.7 14.5"><g transform="translate(6.85,7.25) scale(.92) translate(-6.85,-7.25)" opacity=".93"><circle cx="7" cy="7.4" r="4.2" fill="none" stroke="#f0f0f0" stroke-width="1.4"/><circle cx="7" cy="7.4" r="1.8" fill="#f0f0f0"/><path d="M10.8,2.2 L7.2,2.4 L9.4,5.2 Z" fill="#f0f0f0"/></g></svg>
<div style="left:895px;top:65px;width:13.7px;height:14.5px;background:#2c2c2c;border-radius:2px;border:1px solid #464646;"></div>
<svg style="left:895px;top:65px" width="13.7" height="14.5" viewBox="0 0 13.7 14.5"><g transform="translate(6.85,7.25) scale(.92) translate(-6.85,-7.25)" opacity=".93"><rect x="4" y="4.4" width="6.2" height="5.6" fill="#f0f0f0"/><path d="M2.6,3 L5,5.2 M11.6,3 L9.2,5.2 M2.6,11.4 L5,9.2 M11.6,11.4 L9.2,9.2" stroke="#f0f0f0" stroke-width="1.5"/></g></svg>
<div style="left:911.75px;top:65px;width:14.25px;height:14.5px;background:#464646;border-radius:2.5px;border:1px solid #525252;"></div>
<svg style="left:911.75px;top:65px" width="14.25" height="14.5" viewBox="0 0 14.25 14.5"><g transform="translate(7.12,7.25) scale(.92) translate(-7.12,-7.25)" opacity=".93"><circle cx="7" cy="7.4" r="4.2" fill="none" stroke="#f0f0f0" stroke-width="1.4"/><circle cx="7" cy="7.4" r="1.8" fill="#f0f0f0"/><path d="M3.2,2.2 L6.8,2.4 L4.6,5.2 Z" fill="#f0f0f0"/></g></svg>
<div style="left:929px;top:68px;width:0.9px;height:8.5px;background:#4c4c4c;"></div>
<div style="left:933px;top:65px;width:14.5px;height:14.5px;background:#464646;border-radius:2.5px;border:1px solid #525252;"></div>
<svg style="left:933px;top:65px" width="14.5" height="14.5" viewBox="0 0 14.5 14.5"><g transform="translate(7.25,7.25) scale(.92) translate(-7.25,-7.25)" opacity=".93"><path d="M3,12 V6.6 L6,4.8 V12 Z" fill="#f0f0f0"/><path d="M8,12 V4.8 L11.6,6.6 V12 Z" fill="none" stroke="#f0f0f0" stroke-width="1.1"/><path d="M4.4,3.6 C6,1.8 8.6,1.8 10,3.6" fill="none" stroke="#f0f0f0" stroke-width="1"/></g></svg>
<div style="left:796px;top:82px;width:228px;height:40.8px;background:#4a4846;"></div>
<svg style="left:888.75px;top:82.5px" width="43" height="40"><use href="#art" x="0" y="0" width="43" height="40"/></svg>
<div style="left:879.6px;top:82.2px;width:60px;height:40.6px;background:transparent;border:1.2px solid #e8202a;border-bottom:none;"></div>
<div style="left:796px;top:124.0px;width:228px;height:3.2px;background:#1f2a35;"></div>
<div style="left:796px;top:125.9px;width:228px;height:1.1px;background:#7395b6;"></div>
<div style="left:796px;top:127.2px;width:228px;height:12.6px;background:linear-gradient(#2c3540 0%,#383637 12%,#383637 90%,#2e2d2e 100%);"></div>
<span class="t" style="left:894.0px;top:129.43px;font-size:8px;color:#d4d4d4;transform-origin:0 0;transform:scaleX(0.8484);">Lớp</span>
<svg style="left:1003px;top:128.7px" width="20" height="9" viewBox="0 0 20 9"><path d="M1.8,3.2 H6 V7.4 H1.8 Z" fill="none" stroke="#bdbdbd" stroke-width="1"/><path d="M4.8,3.4 L7.3,1 M5.9,0.8 H7.5 V2.4" fill="none" stroke="#bdbdbd" stroke-width="0.9"/><path d="M12.2,1.8 L16.8,6.6 M16.8,1.8 L12.2,6.6" stroke="#d0d0d0" stroke-width="1.6"/></svg>
<span class="t" style="left:800px;top:145.7px;font-size:7.8px;color:#d0d0d0;transform-origin:0 0;transform:scaleX(0.9192);">Độ trong</span>
<div style="left:857.5px;top:143.8px;width:132.5px;height:9.5px;background:linear-gradient(90deg,#80c6f8,#4e97d5);"></div>
<span class="t" style="left:994.3px;top:145.7px;font-size:7.8px;color:#d8d8d8;transform-origin:0 0;transform:scaleX(0.9043);">100 %</span>
<span class="t" style="left:800px;top:161.7px;font-size:7.8px;color:#d0d0d0;transform-origin:0 0;transform:scaleX(0.8818);">Pha trộn</span>
<div style="left:857.5px;top:158px;width:161.8px;height:13.3px;background:#454545;border-radius:1.5px;"></div>
<span class="t" style="left:860px;top:161.6px;font-size:7.8px;color:#d0d0d0;transform-origin:0 0;transform:scaleX(0.8415);">Bình thường</span>
<svg style="left:1010px;top:162px" width="8" height="6" viewBox="0 0 8 6"><path d="M1.6,1.6 H6.4 L4,4.6 Z" fill="#999"/></svg>
<div style="left:801.75px;top:177.8px;width:6.8px;height:6.8px;background:transparent;border:1px solid #4e4e4e;"></div>
<span class="t" style="left:812.5px;top:177.57px;font-size:7.6px;color:#5e5e5e;transform-origin:0 0;transform:scaleX(0.8857);">Bảo vệ alpha</span>
<div style="left:877.2px;top:177.8px;width:6.8px;height:6.8px;background:#262526;border:1.1px solid #e2e2e2;"></div>
<span class="t" style="left:887.5px;top:177.57px;font-size:7.6px;color:#cfcfcf;transform-origin:0 0;transform:scaleX(0.8717);">Xén bớt</span>
<div style="left:951.6px;top:177.8px;width:6.8px;height:6.8px;background:#262526;border:1.1px solid #e2e2e2;"></div>
<span class="t" style="left:961.8px;top:177.57px;font-size:7.6px;color:#cfcfcf;transform-origin:0 0;transform:scaleX(0.8450);">Khóa</span>
<div style="left:797.5px;top:190.7px;width:212px;height:102px;background:#4a4846;"></div>
<div style="left:797.5px;top:190.7px;width:212px;height:25.2px;background:#559cd1;"></div>
<div style="left:797.5px;top:190.7px;width:12.7px;height:25.2px;background:#5c5c5c;"></div>
<div style="left:797.5px;top:217px;width:212px;height:22.6px;background:#5c5c5c;"></div>
<div style="left:801.3px;top:200px;width:6px;height:6px;background:#d9d9d9;border-radius:50%;"></div>
<div style="left:801.3px;top:225.7px;width:6px;height:6px;background:#d9d9d9;border-radius:50%;"></div>
<div style="left:819.2px;top:200.2px;width:22.6px;height:5.8px;background:#fff;"></div>
<div style="left:819.2px;top:200.2px;width:22.6px;height:2.7px;background:#111;background-image:repeating-linear-gradient(90deg,rgba(255,255,255,.0) 0,rgba(255,255,255,.0) 1.3px,rgba(255,255,255,.35) 1.3px,rgba(255,255,255,.35) 1.9px);"></div>
<div style="left:819.2px;top:202.9px;width:10px;height:2.6px;background:#111;"></div>
<div style="left:819.2px;top:205.4px;width:22.6px;height:0.7px;background:#444;"></div>
<span class="t" style="left:853px;top:200.06px;font-size:8.2px;color:#fff;font-weight:bold;transform-origin:0 0;transform:scaleX(1.0315);">anhduckieran</span>
<svg style="left:996px;top:197.3px" width="11.6" height="11.6" viewBox="0 0 11.6 11.6"><circle cx="5.8" cy="5.8" r="3.4" fill="#fff"/><g stroke="#fff" stroke-width="1.9"><path d="M5.8,0.4 V11.2 M0.4,5.8 H11.2 M2,2 L9.6,9.6 M9.6,2 L2,9.6"/></g><circle cx="5.8" cy="5.8" r="1.5" fill="#559cd1"/></svg>
<svg style="left:819.75px;top:218.75px" width="22" height="20"><use href="#art" x="0" y="0" width="22" height="20"/></svg>
<span class="t" style="left:853px;top:225.83px;font-size:8px;color:#f2f2f2;transform-origin:0 0;transform:scaleX(0.8766);">Lớp1</span>
<div style="left:1010.5px;top:190.7px;width:12px;height:102px;background:#2d2d2d;"></div>
<div style="left:1011.3px;top:198px;width:10.5px;height:86px;background:#6b6b6b;border-radius:3px;"></div>
<svg style="left:1010.5px;top:190.7px" width="12" height="102" viewBox="0 0 12 102"><path d="M5.8,1.6 L8.6,5.6 H3 Z" fill="#9a9a9a"/><path d="M5.8,101 L8.6,97 H3 Z" fill="#8a8a8a"/></svg>
<div style="left:800.5px;top:296.2px;width:13.8px;height:13.8px;background:#464646;border-radius:2.5px;border:1px solid #525252;"></div>
<svg style="left:800.5px;top:296.2px" width="13.8" height="13.8" viewBox="0 0 13.8 13.8"><g transform="translate(6.90,6.90) scale(.92) translate(-6.90,-6.90)" opacity=".93"><path d="M2.8,2.2 H7.4 L10.4,5.2 V11 H2.8 Z" fill="#363636" stroke="#f0f0f0" stroke-width="1.2"/><path d="M7.2,2 V5.4 H10.6 Z" fill="#f0f0f0"/></g></svg>
<div style="left:817.5px;top:296.2px;width:13.8px;height:13.8px;background:#464646;border-radius:2.5px;border:1px solid #525252;"></div>
<svg style="left:817.5px;top:296.2px" width="13.8" height="13.8" viewBox="0 0 13.8 13.8"><g transform="translate(6.90,6.90) scale(.92) translate(-6.90,-6.90)" opacity=".93"><path d="M2.8,2.2 H7.4 L10.4,5.2 V11 H2.8 Z" fill="#363636" stroke="#f0f0f0" stroke-width="1.2"/><path d="M7.2,2 V5.4 H10.6 Z" fill="#f0f0f0"/><text x="6.8" y="10.2" font-size="5.8" font-weight="bold" font-family="Liberation Sans" fill="#f0f0f0" text-anchor="middle">8</text></g></svg>
<div style="left:834.75px;top:296.2px;width:13.75px;height:13.8px;background:#464646;border-radius:2.5px;border:1px solid #525252;"></div>
<svg style="left:834.75px;top:296.2px" width="13.75" height="13.8" viewBox="0 0 13.75 13.8"><g transform="translate(6.88,6.90) scale(.92) translate(-6.88,-6.90)" opacity=".93"><path d="M2.8,2.2 H7.4 L10.4,5.2 V11 H2.8 Z" fill="#363636" stroke="#f0f0f0" stroke-width="1.2"/><path d="M7.2,2 V5.4 H10.6 Z" fill="#f0f0f0"/><text x="6.8" y="10.2" font-size="5.8" font-weight="bold" font-family="Liberation Sans" fill="#f0f0f0" text-anchor="middle">1</text></g></svg>
<div style="left:852.25px;top:296.2px;width:18.25px;height:13.8px;background:#464646;border-radius:2.5px;border:1px solid #525252;"></div>
<svg style="left:852.25px;top:296.2px" width="18.25" height="13.8" viewBox="0 0 18.25 13.8"><g transform="translate(9.12,6.90) scale(.92) translate(-9.12,-6.90)" opacity=".93"><path d="M3,2.6 H7 L9.2,4.8 V11.4 H3 Z" fill="none" stroke="#f0f0f0" stroke-width="1"/><path d="M6.6,9.6 H10 M8.3,8 V11.2" stroke="#f0f0f0" stroke-width="1.2"/><path d="M12.4,6.2 H16.6 L14.5,8.8 Z" fill="#f0f0f0"/></g></svg>
<div style="left:873.5px;top:296.2px;width:14.5px;height:13.8px;background:#464646;border-radius:2.5px;border:1px solid #525252;"></div>
<svg style="left:873.5px;top:296.2px" width="14.5" height="13.8" viewBox="0 0 14.5 13.8"><g transform="translate(7.25,6.90) scale(.92) translate(-7.25,-6.90)" opacity=".93"><path d="M2.6,3.6 H6.2 L7.2,4.8 H12 V11.2 H2.6 Z" fill="#f0f0f0"/></g></svg>
<div style="left:891.2px;top:299.2px;width:0.9px;height:7.800000000000011px;background:#4c4c4c;"></div>
<div style="left:895px;top:296.2px;width:14.25px;height:13.8px;background:#464646;border-radius:2.5px;border:1px solid #525252;"></div>
<svg style="left:895px;top:296.2px" width="14.25" height="13.8" viewBox="0 0 14.25 13.8"><g transform="translate(7.12,6.90) scale(.92) translate(-7.12,-6.90)" opacity=".93"><rect x="5.4" y="3" width="6" height="6" fill="none" stroke="#f0f0f0" stroke-width="1"/><rect x="3" y="5.4" width="6" height="6" fill="#474747" stroke="#f0f0f0" stroke-width="1"/></g></svg>
<div style="left:912.5px;top:296.2px;width:14.5px;height:13.8px;background:#2c2c2c;border-radius:2px;border:1px solid #464646;"></div>
<svg style="left:912.5px;top:296.2px" width="14.5" height="13.8" viewBox="0 0 14.5 13.8"><g transform="translate(7.25,6.90) scale(.92) translate(-7.25,-6.90)" opacity=".93"><rect x="2.8" y="2.8" width="3.4" height="3.4" fill="none" stroke="#f0f0f0" stroke-width="1"/><rect x="2.8" y="8.4" width="3.4" height="3.4" fill="none" stroke="#f0f0f0" stroke-width="1"/><rect x="8.2" y="5.4" width="3.8" height="3.8" fill="#f0f0f0"/><path d="M6.2,4.5 H7.2 V10 H6.2 M7.2,7.3 H8.2" stroke="#f0f0f0" stroke-width=".9" fill="none"/></g></svg>
<div style="left:930.5px;top:299.2px;width:0.9px;height:7.800000000000011px;background:#4c4c4c;"></div>
<div style="left:934.25px;top:296.2px;width:14.25px;height:13.8px;background:#464646;border-radius:2.5px;border:1px solid #525252;"></div>
<svg style="left:934.25px;top:296.2px" width="14.25" height="13.8" viewBox="0 0 14.25 13.8"><g transform="translate(7.12,6.90) scale(.92) translate(-7.12,-6.90)" opacity=".93"><path d="M3.2,4.4 H11 M5.6,4.2 V3 H8.6 V4.2" fill="none" stroke="#f0f0f0" stroke-width="1.2"/><path d="M4,5.4 H10.2 V11.8 H4 Z" fill="none" stroke="#f0f0f0" stroke-width="1.3"/><path d="M6.1,5.8 V11.8 M8.1,5.8 V11.8" stroke="#f0f0f0" stroke-width="1.1"/></g></svg>
<div style="left:796px;top:315.3px;width:228px;height:3.2px;background:#1f2a35;"></div>
<div style="left:796px;top:317.2px;width:228px;height:1.1px;background:#7395b6;"></div>
<div style="left:796px;top:318.5px;width:228px;height:12.6px;background:linear-gradient(#2c3540 0%,#383637 12%,#383637 90%,#2e2d2e 100%);"></div>
<span class="t" style="left:884.0px;top:320.73px;font-size:8px;color:#d4d4d4;transform-origin:0 0;transform:scaleX(0.8670);">Reference</span>
<svg style="left:1003px;top:320.0px" width="20" height="9" viewBox="0 0 20 9"><path d="M1.8,3.2 H6 V7.4 H1.8 Z" fill="none" stroke="#bdbdbd" stroke-width="1"/><path d="M4.8,3.4 L7.3,1 M5.9,0.8 H7.5 V2.4" fill="none" stroke="#bdbdbd" stroke-width="0.9"/><path d="M12.2,1.8 L16.8,6.6 M16.8,1.8 L12.2,6.6" stroke="#d0d0d0" stroke-width="1.6"/></svg>
<div style="left:799.25px;top:333.75px;width:14.25px;height:14.25px;background:#464646;border-radius:2.5px;border:1px solid #525252;"></div>
<svg style="left:799.25px;top:333.75px" width="14.25" height="14.25" viewBox="0 0 14.25 14.25"><g transform="translate(7.12,7.12) scale(.92) translate(-7.12,-7.12)" opacity=".93"><path d="M3,7.2 C1.8,7 2,4.9 3.6,4.9 C3.8,2.8 6.6,2.2 7.6,3.8 C9.4,3 11.2,4 10.8,5.5 C12.4,5.7 12.2,7.4 11,7.4 Z" fill="#f0f0f0"/><path d="M7.1,12.2 V7.5 M4.9,9.6 L7.1,7.2 L9.3,9.6" fill="none" stroke="#f0f0f0" stroke-width="1.6"/></g></svg>
<div style="left:816px;top:333.75px;width:14.5px;height:14.25px;background:#464646;border-radius:2.5px;border:1px solid #525252;"></div>
<svg style="left:816px;top:333.75px" width="14.5" height="14.25" viewBox="0 0 14.5 14.25"><g transform="translate(7.25,7.12) scale(.92) translate(-7.25,-7.12)" opacity=".93"><path d="M2.4,3.4 H5.6 L6.6,4.6 H10.6 V6 H4.4 L2.4,10.8 Z" fill="#f0f0f0"/><path d="M4.8,6.8 H12.6 L10.8,11 H3 Z" fill="#f0f0f0"/></g></svg>
<div style="left:833.5px;top:333.75px;width:14.5px;height:14.25px;background:#2c2c2c;border-radius:2px;border:1px solid #464646;"></div>
<svg style="left:833.5px;top:333.75px" width="14.5" height="14.25" viewBox="0 0 14.5 14.25"><g transform="translate(7.25,7.12) scale(.92) translate(-7.25,-7.12)" opacity=".93"><path d="M4.4,4.6 L10,10.2 M10,4.6 L4.4,10.2" stroke="#f0f0f0" stroke-width="1.5"/></g></svg>
<div style="left:851.2px;top:336.75px;width:0.9px;height:8.25px;background:#4c4c4c;"></div>
<div style="left:855.5px;top:333.75px;width:13.9px;height:14.25px;background:#2c2c2c;border-radius:2px;border:1px solid #464646;"></div>
<svg style="left:855.5px;top:333.75px" width="13.9" height="14.25" viewBox="0 0 13.9 14.25"><g transform="translate(6.95,7.12) scale(.92) translate(-6.95,-7.12)" opacity=".93"><circle cx="6.2" cy="6.2" r="3.5" fill="none" stroke="#f0f0f0" stroke-width="1.3"/><path d="M8.8,8.8 L11.8,11.8" stroke="#f0f0f0" stroke-width="1.8" stroke-linecap="round"/><path d="M4.4,6.2 H8 M6.2,4.4 V8" stroke="#f0f0f0" stroke-width="1.1"/></g></svg>
<div style="left:872.5px;top:333.75px;width:13.9px;height:14.25px;background:#2c2c2c;border-radius:2px;border:1px solid #464646;"></div>
<svg style="left:872.5px;top:333.75px" width="13.9" height="14.25" viewBox="0 0 13.9 14.25"><g transform="translate(6.95,7.12) scale(.92) translate(-6.95,-7.12)" opacity=".93"><path d="M3,5.4 V3 H5.4 M8.8,3 H11.2 V5.4 M11.2,8.8 V11.2 H8.8 M5.4,11.2 H3 V8.8" fill="none" stroke="#f0f0f0" stroke-width="1.3"/><rect x="4.6" y="4.6" width="5" height="5" fill="none" stroke="#f0f0f0" stroke-width=".8"/></g></svg>
<div style="left:889.75px;top:333.75px;width:14.05px;height:14.25px;background:#2c2c2c;border-radius:2px;border:1px solid #464646;"></div>
<svg style="left:889.75px;top:333.75px" width="14.05" height="14.25" viewBox="0 0 14.05 14.25"><g transform="translate(7.03,7.12) scale(.92) translate(-7.03,-7.12)" opacity=".93"><circle cx="6.2" cy="6.2" r="3.5" fill="none" stroke="#f0f0f0" stroke-width="1.3"/><path d="M8.8,8.8 L11.8,11.8" stroke="#f0f0f0" stroke-width="1.8" stroke-linecap="round"/><path d="M4.4,6.2 H8" stroke="#f0f0f0" stroke-width="1.1"/></g></svg>
<div style="left:907.3px;top:336.75px;width:0.9px;height:8.25px;background:#4c4c4c;"></div>
<div style="left:911.75px;top:333.75px;width:13.85px;height:14.25px;background:#2c2c2c;border-radius:2px;border:1px solid #464646;"></div>
<svg style="left:911.75px;top:333.75px" width="13.85" height="14.25" viewBox="0 0 13.85 14.25"><g transform="translate(6.92,7.12) scale(.92) translate(-6.92,-7.12)" opacity=".93"><path d="M3.2,11.4 L3.7,9.4 L8.2,4.9 L9.7,6.4 L5.2,10.9 Z" fill="none" stroke="#f0f0f0" stroke-width="1.1" stroke-linejoin="round"/><path d="M7.8,3.8 L10.8,6.8 M9,5.2 L11.2,3" stroke="#f0f0f0" stroke-width="1.9" stroke-linecap="round"/></g></svg>
<div style="left:928.75px;top:333.75px;width:14.75px;height:14.25px;background:#559cd1;border-radius:2px;"></div>
<svg style="left:928.75px;top:333.75px" width="14.75" height="14.25" viewBox="0 0 14.75 14.25"><g transform="translate(7.38,7.12) scale(.92) translate(-7.38,-7.12)" opacity=".93"><path d="M4.6,8 V4 M6.4,7.4 V2.8 M8.2,7.4 V3 M10,8 V4.2" stroke="#fff" stroke-width="1.5" stroke-linecap="round"/><path d="M3.9,7.6 H10.8 V9.8 C10.8,12 9.2,12.8 7.6,12.8 C5.6,12.8 4.6,11.8 3.9,10.2 Z" fill="#fff"/><path d="M4.3,10.8 L2.4,8.2" stroke="#fff" stroke-width="1.6" stroke-linecap="round"/></g></svg>
<div style="left:946.8px;top:336.75px;width:0.9px;height:8.25px;background:#4c4c4c;"></div>
<div style="left:950.5px;top:333.75px;width:14.3px;height:14.25px;background:#2c2c2c;border-radius:2px;border:1px solid #464646;"></div>
<svg style="left:950.5px;top:333.75px" width="14.3" height="14.25" viewBox="0 0 14.3 14.25"><g transform="translate(7.15,7.12) scale(.92) translate(-7.15,-7.12)" opacity=".93"><circle cx="7" cy="7.4" r="4.2" fill="none" stroke="#f0f0f0" stroke-width="1.4"/><circle cx="7" cy="7.4" r="1.8" fill="#f0f0f0"/><path d="M10.8,2.2 L7.2,2.4 L9.4,5.2 Z" fill="#f0f0f0"/></g></svg>
<div style="left:968px;top:333.75px;width:14px;height:14.25px;background:#2c2c2c;border-radius:2px;border:1px solid #464646;"></div>
<svg style="left:968px;top:333.75px" width="14" height="14.25" viewBox="0 0 14 14.25"><g transform="translate(7.00,7.12) scale(.92) translate(-7.00,-7.12)" opacity=".93"><rect x="4" y="4.4" width="6.2" height="5.6" fill="#f0f0f0"/><path d="M2.6,3 L5,5.2 M11.6,3 L9.2,5.2 M2.6,11.4 L5,9.2 M11.6,11.4 L9.2,9.2" stroke="#f0f0f0" stroke-width="1.5"/></g></svg>
<div style="left:985.5px;top:333.75px;width:13.9px;height:14.25px;background:#2c2c2c;border-radius:2px;border:1px solid #464646;"></div>
<svg style="left:985.5px;top:333.75px" width="13.9" height="14.25" viewBox="0 0 13.9 14.25"><g transform="translate(6.95,7.12) scale(.92) translate(-6.95,-7.12)" opacity=".93"><circle cx="7" cy="7.4" r="4.2" fill="none" stroke="#f0f0f0" stroke-width="1.4"/><circle cx="7" cy="7.4" r="1.8" fill="#f0f0f0"/><path d="M3.2,2.2 L6.8,2.4 L4.6,5.2 Z" fill="#f0f0f0"/></g></svg>
<div style="left:1003px;top:336.75px;width:0.9px;height:8.25px;background:#4c4c4c;"></div>
<div style="left:1006.75px;top:333.75px;width:14.25px;height:14.25px;background:#2c2c2c;border-radius:2px;border:1px solid #464646;"></div>
<svg style="left:1006.75px;top:333.75px" width="14.25" height="14.25" viewBox="0 0 14.25 14.25"><g transform="translate(7.12,7.12) scale(.92) translate(-7.12,-7.12)" opacity=".93"><path d="M3,12 V6.6 L6,4.8 V12 Z" fill="#f0f0f0"/><path d="M8,12 V4.8 L11.6,6.6 V12 Z" fill="none" stroke="#f0f0f0" stroke-width="1.1"/><path d="M4.4,3.6 C6,1.8 8.6,1.8 10,3.6" fill="none" stroke="#f0f0f0" stroke-width="1"/></g></svg>
<div style="left:796px;top:351.2px;width:228px;height:39.4px;background:#fdfdfd;background-image:linear-gradient(45deg,#ececec 25%,transparent 25%,transparent 75%,#ececec 75%),linear-gradient(45deg,#ececec 25%,transparent 25%,transparent 75%,#ececec 75%);background-size:5.1px 5.1px;background-position:0 0,2.55px 2.55px;"></div>
<div style="left:796px;top:392.0px;width:228px;height:3.2px;background:#1f2a35;"></div>
<div style="left:796px;top:393.9px;width:228px;height:1.1px;background:#7395b6;"></div>
<div style="left:796px;top:395.2px;width:228px;height:12.4px;background:linear-gradient(#2c3540 0%,#383637 12%,#383637 90%,#2e2d2e 100%);"></div>
<span class="t" style="left:884.0px;top:397.23px;font-size:8px;color:#d4d4d4;transform-origin:0 0;transform:scaleX(0.8272);">Brush Size</span>
<svg style="left:1003px;top:396.7px" width="20" height="9" viewBox="0 0 20 9"><path d="M1.8,3.2 H6 V7.4 H1.8 Z" fill="none" stroke="#bdbdbd" stroke-width="1"/><path d="M4.8,3.4 L7.3,1 M5.9,0.8 H7.5 V2.4" fill="none" stroke="#bdbdbd" stroke-width="0.9"/><path d="M12.2,1.8 L16.8,6.6 M16.8,1.8 L12.2,6.6" stroke="#d0d0d0" stroke-width="1.6"/></svg>
<div style="left:796px;top:407.6px;width:228px;height:129.7px;background:#4a4846;"></div>
<div style="left:796px;top:408px;width:25px;height:31px;background:#5c5c5c;"></div>
<span class="t" style="left:807.7407196514423px;top:432.98px;font-size:6.4px;color:#ededed;transform-origin:0 0;transform:scaleX(0.9799);">1</span>
<div style="left:822px;top:408px;width:24px;height:31px;background:#5c5c5c;"></div>
<span class="t" style="left:830.5944576322115px;top:432.98px;font-size:6.4px;color:#ededed;transform-origin:0 0;transform:scaleX(0.9799);">1.5</span>
<div style="left:847px;top:408px;width:25px;height:31px;background:#5c5c5c;"></div>
<span class="t" style="left:858.6782196514423px;top:432.98px;font-size:6.4px;color:#ededed;transform-origin:0 0;transform:scaleX(0.9799);">2</span>
<div style="left:873px;top:408px;width:24px;height:31px;background:#5c5c5c;"></div>
<span class="t" style="left:884.1469696514423px;top:432.98px;font-size:6.4px;color:#ededed;transform-origin:0 0;transform:scaleX(0.9799);">3</span>
<div style="left:898px;top:408px;width:25px;height:31px;background:#5c5c5c;"></div>
<span class="t" style="left:909.6157196514423px;top:432.98px;font-size:6.4px;color:#ededed;transform-origin:0 0;transform:scaleX(0.9799);">4</span>
<div style="left:924px;top:408px;width:24px;height:31px;background:#5c5c5c;"></div>
<span class="t" style="left:935.0844696514423px;top:432.98px;font-size:6.4px;color:#ededed;transform-origin:0 0;transform:scaleX(0.9799);">5</span>
<div style="left:949px;top:408px;width:25px;height:31px;background:#5c5c5c;"></div>
<span class="t" style="left:960.5532196514423px;top:432.98px;font-size:6.4px;color:#ededed;transform-origin:0 0;transform:scaleX(0.9799);">7</span>
<div style="left:975px;top:408px;width:24px;height:31px;background:#5c5c5c;"></div>
<span class="t" style="left:984.2783143028846px;top:432.98px;font-size:6.4px;color:#ededed;transform-origin:0 0;transform:scaleX(0.9799);">10</span>
<div style="left:796px;top:440px;width:25px;height:31px;background:#5c5c5c;"></div>
<span class="t" style="left:805.9970643028846px;top:464.98px;font-size:6.4px;color:#ededed;transform-origin:0 0;transform:scaleX(0.9799);">12</span>
<div style="left:822px;top:440px;width:24px;height:31px;background:#5c5c5c;"></div>
<span class="t" style="left:831.4658143028846px;top:464.98px;font-size:6.4px;color:#ededed;transform-origin:0 0;transform:scaleX(0.9799);">15</span>
<div style="left:847px;top:440px;width:25px;height:31px;background:#5c5c5c;"></div>
<span class="t" style="left:856.9345643028846px;top:464.98px;font-size:6.4px;color:#ededed;transform-origin:0 0;transform:scaleX(0.9799);">20</span>
<div style="left:873px;top:440px;width:24px;height:31px;background:#5c5c5c;"></div>
<span class="t" style="left:882.4033143028846px;top:464.98px;font-size:6.4px;color:#ededed;transform-origin:0 0;transform:scaleX(0.9799);">25</span>
<div style="left:898px;top:440px;width:25px;height:31px;background:#5c5c5c;"></div>
<span class="t" style="left:907.8720643028846px;top:464.98px;font-size:6.4px;color:#ededed;transform-origin:0 0;transform:scaleX(0.9799);">30</span>
<div style="left:924px;top:440px;width:24px;height:31px;background:#5c5c5c;"></div>
<span class="t" style="left:933.3408143028846px;top:464.98px;font-size:6.4px;color:#ededed;transform-origin:0 0;transform:scaleX(0.9799);">40</span>
<div style="left:949px;top:440px;width:25px;height:31px;background:#5c5c5c;"></div>
<span class="t" style="left:958.8095643028846px;top:464.98px;font-size:6.4px;color:#ededed;transform-origin:0 0;transform:scaleX(0.9799);">50</span>
<div style="left:975px;top:440px;width:24px;height:31px;background:#5c5c5c;"></div>
<span class="t" style="left:984.2783143028846px;top:464.98px;font-size:6.4px;color:#ededed;transform-origin:0 0;transform:scaleX(0.9799);">70</span>
<div style="left:796px;top:472px;width:25px;height:31px;background:#5c5c5c;"></div>
<span class="t" style="left:804.2534089543269px;top:496.98px;font-size:6.4px;color:#ededed;transform-origin:0 0;transform:scaleX(0.9799);">100</span>
<div style="left:822px;top:472px;width:24px;height:31px;background:#5c5c5c;"></div>
<span class="t" style="left:829.7221589543269px;top:496.98px;font-size:6.4px;color:#ededed;transform-origin:0 0;transform:scaleX(0.9799);">150</span>
<div style="left:847px;top:472px;width:25px;height:31px;background:#5c5c5c;"></div>
<span class="t" style="left:855.1909089543269px;top:496.98px;font-size:6.4px;color:#ededed;transform-origin:0 0;transform:scaleX(0.9799);">200</span>
<div style="left:873px;top:472px;width:24px;height:31px;background:#5c5c5c;"></div>
<span class="t" style="left:880.6596589543269px;top:496.98px;font-size:6.4px;color:#ededed;transform-origin:0 0;transform:scaleX(0.9799);">300</span>
<div style="left:898px;top:472px;width:25px;height:31px;background:#5c5c5c;"></div>
<span class="t" style="left:906.1284089543269px;top:496.98px;font-size:6.4px;color:#ededed;transform-origin:0 0;transform:scaleX(0.9799);">400</span>
<div style="left:924px;top:472px;width:24px;height:31px;background:#5c5c5c;"></div>
<span class="t" style="left:931.5971589543269px;top:496.98px;font-size:6.4px;color:#ededed;transform-origin:0 0;transform:scaleX(0.9799);">500</span>
<div style="left:949px;top:472px;width:25px;height:31px;background:#5c5c5c;"></div>
<span class="t" style="left:957.0659089543269px;top:496.98px;font-size:6.4px;color:#ededed;transform-origin:0 0;transform:scaleX(0.9799);">700</span>
<div style="left:975px;top:472px;width:24px;height:31px;background:#5c5c5c;"></div>
<span class="t" style="left:980.7910036057692px;top:496.98px;font-size:6.4px;color:#ededed;transform-origin:0 0;transform:scaleX(0.9799);">1000</span>
<svg width="1024" height="576" style="left:0;top:0"><circle cx="809.48" cy="420.50" r="0.25" fill="#f4f4f4" opacity="0.40"/><circle cx="834.95" cy="420.50" r="0.4" fill="#f4f4f4" opacity="0.55"/><circle cx="860.42" cy="420.50" r="0.6" fill="#f4f4f4" opacity="0.75"/><circle cx="885.89" cy="420.50" r="0.8" fill="#f4f4f4" opacity="1.00"/><circle cx="911.36" cy="420.50" r="1.2" fill="#f4f4f4" opacity="1.00"/><circle cx="936.83" cy="420.50" r="1.5" fill="#f4f4f4" opacity="1.00"/><circle cx="962.30" cy="420.50" r="2.4" fill="#f4f4f4" opacity="1.00"/><circle cx="987.77" cy="420.50" r="3.3" fill="#f4f4f4" opacity="1.00"/><circle cx="809.48" cy="452.50" r="4" fill="#f4f4f4" opacity="1.00"/><circle cx="834.95" cy="452.50" r="4.7" fill="#f4f4f4" opacity="1.00"/><circle cx="860.42" cy="452.50" r="6.7" fill="#f4f4f4" opacity="1.00"/><circle cx="885.89" cy="452.50" r="7.8" fill="#f4f4f4" opacity="1.00"/><circle cx="911.36" cy="452.50" r="7.8" fill="#f4f4f4" opacity="1.00"/><circle cx="936.83" cy="452.50" r="7.8" fill="#f4f4f4" opacity="1.00"/><circle cx="962.30" cy="452.50" r="7.8" fill="#f4f4f4" opacity="1.00"/><circle cx="987.77" cy="452.50" r="7.8" fill="#f4f4f4" opacity="1.00"/><circle cx="809.48" cy="484.50" r="7.8" fill="#f4f4f4" opacity="1.00"/><circle cx="834.95" cy="484.50" r="7.8" fill="#f4f4f4" opacity="1.00"/><circle cx="860.42" cy="484.50" r="7.8" fill="#f4f4f4" opacity="1.00"/><circle cx="885.89" cy="484.50" r="7.8" fill="#f4f4f4" opacity="1.00"/><circle cx="911.36" cy="484.50" r="7.8" fill="#f4f4f4" opacity="1.00"/><circle cx="936.83" cy="484.50" r="7.8" fill="#f4f4f4" opacity="1.00"/><circle cx="962.30" cy="484.50" r="7.8" fill="#f4f4f4" opacity="1.00"/><circle cx="987.77" cy="484.50" r="7.8" fill="#f4f4f4" opacity="1.00"/></svg>
<div style="left:1010.5px;top:407.6px;width:12px;height:130px;background:#2d2d2d;"></div>
<div style="left:1011.3px;top:415px;width:10.5px;height:115px;background:#6b6b6b;border-radius:3px;"></div>
<svg style="left:1010.5px;top:407.6px" width="12" height="130" viewBox="0 0 12 130"><path d="M5.8,2 L8.6,6 H3 Z" fill="#9a9a9a"/><path d="M5.8,129 L8.6,125 H3 Z" fill="#8a8a8a"/></svg>
<div style="left:0px;top:536px;width:796px;height:14px;background:#252525;"></div>
<div style="left:796px;top:537.3px;width:228px;height:12.7px;background:#252525;"></div>
<div style="left:135px;top:536.6px;width:658px;height:1px;background:#3a3a3a;"></div>
<span class="t" style="left:3.75px;top:540.48px;font-size:7.7px;color:#cdcdcd;transform-origin:0 0;transform:scaleX(0.9318);">709 * 668 pixel</span>
<span class="t" style="left:58px;top:540.48px;font-size:7.7px;color:#cdcdcd;transform-origin:0 0;transform:scaleX(0.9159);">(18.8 * 17.7cm)</span>
<span class="t" style="left:113.75px;top:540.48px;font-size:7.7px;color:#cdcdcd;transform-origin:0 0;transform:scaleX(0.8793);">96 dpi</span>
<span class="t" style="left:139.5px;top:540.48px;font-size:7.7px;color:#cdcdcd;transform-origin:0 0;transform:scaleX(0.8675);">100 %</span>
<span class="t" style="left:165.5px;top:540.48px;font-size:7.7px;color:#cdcdcd;transform-origin:0 0;transform:scaleX(0.8745);">( 209, 682 )</span>
<div style="left:0px;top:549.8px;width:1024px;height:26.2px;background:linear-gradient(90deg,#4f3632 0%,#4c3534 46%,#41333f 53%,#3c3140 70%,#322c39 85%,#2a2530 100%);"></div>
<svg style="left:10px;top:558px" width="11" height="11" viewBox="0 0 11 11"><path d="M0,1.5 L4.6,0.8 V5 H0 Z M5.4,0.7 L10.8,0 V5 H5.4 Z M0,5.8 H4.6 V10 L0,9.3 Z M5.4,5.8 H10.8 V10.8 L5.4,10.1 Z" fill="#fff"/></svg>
<div style="left:31.3px;top:550.7px;width:219.4px;height:25.3px;background:#f3f3f3;"></div>
<svg style="left:37px;top:555px" width="14" height="14" viewBox="0 0 14 14"><circle cx="8" cy="5.8" r="3.3" fill="none" stroke="#222" stroke-width="1.1"/><path d="M5.7,8.2 L2,12" stroke="#222" stroke-width="1.2"/></svg>
<span class="t" style="left:57px;top:558.87px;font-size:9.6px;color:#252525;transform-origin:0 0;transform:scaleX(0.9547);">Type here to search</span>
<svg style="left:258px;top:555px" width="17" height="17" viewBox="0 0 17 17"><circle cx="8.3" cy="8.3" r="4.2" fill="none" stroke="#fff" stroke-width="1.8"/></svg>
<svg style="left:289px;top:555px" width="17" height="17" viewBox="0 0 17 17"><rect x="3.8" y="4.4" width="6.4" height="6.4" fill="none" stroke="#fff" stroke-width="1.2"/><path d="M3.2,2.6 H10.6 M3.2,12.7 H10.6" stroke="#fff" stroke-width=".9"/><path d="M12.4,2.4 V13" stroke="#fff" stroke-width="1.2"/><circle cx="12.4" cy="4.8" r="1.2" fill="#fff"/></svg>
<svg style="left:321px;top:554px" width="18" height="18" viewBox="0 0 18 18"><path d="M6,5 V3.4 C6,1.4 11,1.4 11,3.4 V5" fill="none" stroke="#fff" stroke-width="1.2"/><path d="M1.6,5 H15.4 V14 C15.4,15 15,15.4 14,15.4 H3 C2,15.4 1.6,15 1.6,14 Z" fill="#f4f4f4"/><rect x="5.4" y="7.4" width="2.8" height="2.8" fill="#f25022"/><rect x="8.8" y="7.4" width="2.8" height="2.8" fill="#7fba00"/><rect x="5.4" y="10.8" width="2.8" height="2.8" fill="#00a4ef"/><rect x="8.8" y="10.8" width="2.8" height="2.8" fill="#ffb900"/></svg>
<svg style="left:352px;top:554px" width="19" height="18" viewBox="0 0 19 18"><path d="M1,7.2 L9.2,1.6 L17.4,7.2 V15.6 H1 Z" fill="#1a7fd4"/><path d="M1,8 L9.2,12.6 L17.4,8 V15.6 H1 Z" fill="#3fa9f5"/><path d="M2.6,6.4 H15.8 V9.4 L9.2,12.8 L2.6,9.4 Z" fill="#eaf4fd"/><path d="M1,8 L9.2,12.6 L17.4,8 V15.8 H1 Z" fill="#2f9bee"/><path d="M1,15.8 L9.2,10.6 L17.4,15.8 Z" fill="#55b4f7" opacity=".55"/></svg>
<svg style="left:383px;top:554px" width="18" height="18" viewBox="0 0 18 18"><circle cx="9" cy="9" r="7" fill="#86cb4e"/><circle cx="9" cy="9.4" r="3.8" fill="none" stroke="#e4f3d4" stroke-width="1.5"/><circle cx="9" cy="9.4" r="1.5" fill="#5aa83a"/><path d="M10.5,4.4 L15.4,1.6 L14.6,6.6 Z" fill="#f0f3e8"/><circle cx="14" cy="3.4" r="1.6" fill="#f7d23a"/></svg>
<svg style="left:415px;top:555px" width="18" height="18" viewBox="0 0 18 18"><ellipse cx="8.8" cy="8.8" rx="7.2" ry="7.4" fill="#e4212c"/><ellipse cx="8.8" cy="8.8" rx="2.9" ry="5.3" fill="#4d3533"/></svg>
<div style="left:440px;top:549.6px;width:30px;height:26.4px;background:#6d5c5b;"></div>
<svg style="left:447.5px;top:555px" width="15.5" height="15.2" viewBox="0 0 15.5 15.2"><rect x="0" y="0" width="15.5" height="15.2" rx="3" fill="#f5f5f5"/><circle cx="7.8" cy="7.8" r="5.4" fill="#2bb39a"/><path d="M7.8,2.4 A5.4,5.4 0 0 1 12.4,5 L8.4,7 Z" fill="#f2603c"/><path d="M3,10 A5.4,5.4 0 0 0 8.4,13.2 L7.4,8.6 Z" fill="#3a86d9"/><path d="M3.2,5 A5.4,5.4 0 0 1 7.8,2.4 L7.8,7.4 Z" fill="#8ccf4c"/></svg>
<div style="left:381px;top:574.8px;width:24px;height:1.2px;background:#8fb6d9;"></div>
<div style="left:411px;top:574.8px;width:26px;height:1.2px;background:#8fb6d9;"></div>
<div style="left:440px;top:574.6px;width:30px;height:1.4px;background:#9cc3e6;"></div>
<svg style="left:852px;top:558px" width="10" height="10" viewBox="0 0 10 10"><path d="M1.2,6.8 L4.8,3.2 L8.4,6.8" fill="none" stroke="#fff" stroke-width="1.1"/></svg>
<svg style="left:867px;top:558px" width="12" height="10" viewBox="0 0 12 10"><rect x="1" y="2.6" width="8.6" height="5.2" fill="none" stroke="#fff" stroke-width="1"/><rect x="1.8" y="3.4" width="2.6" height="3.6" fill="#fff"/><rect x="9.8" y="4.2" width="1" height="2" fill="#fff"/></svg>
<svg style="left:883px;top:556.5px" width="11" height="12" viewBox="0 0 11 12"><path d="M1.4,10.4 A8.6,8.6 0 0 1 10,1.8" fill="none" stroke="#fff" stroke-width="1"/><path d="M3.8,10.4 A6.2,6.2 0 0 1 10,4.2" fill="none" stroke="#fff" stroke-width="1"/><path d="M6.2,10.4 A3.8,3.8 0 0 1 10,6.6" fill="none" stroke="#fff" stroke-width="1"/><circle cx="9.2" cy="9.8" r="1" fill="#fff"/></svg>
<svg style="left:897px;top:557px" width="12" height="12" viewBox="0 0 12 12"><path d="M1.2,4.4 H3.2 L5.8,2 V10 L3.2,7.6 H1.2 Z" fill="none" stroke="#fff" stroke-width="1"/><path d="M7.4,4.2 C8.2,5.2 8.2,6.8 7.4,7.8 M8.8,3 C10.4,4.8 10.4,7.2 8.8,9" fill="none" stroke="#fff" stroke-width=".9"/></svg>
<svg style="left:913px;top:557px" width="10" height="13" viewBox="0 0 10 13"><rect x="1.6" y="2.2" width="5.6" height="7.6" rx="1.6" fill="none" stroke="#fff" stroke-width="1"/><path d="M2.6,1 H6.2 M2.6,11.4 H6.2" stroke="#fff" stroke-width="1"/><path d="M7.4,4.8 L9.2,3.6 V8.4 L7.4,7.2" fill="none" stroke="#fff" stroke-width=".9"/></svg>
<span class="t" style="left:932.5px;top:559.77px;font-size:7.6px;color:#fff;transform-origin:0 0;transform:scaleX(0.8572);">VIE</span>
<span class="t" style="left:953.5px;top:552.91px;font-size:7.9px;color:#fff;transform-origin:0 0;transform:scaleX(0.9438);">10:50 AM</span>
<span class="t" style="left:953px;top:564.51px;font-size:7.9px;color:#fff;transform-origin:0 0;transform:scaleX(0.9249);">8/21/2021</span>
<svg style="left:996px;top:556px" width="18" height="18" viewBox="0 0 18 18"><path d="M1.6,1.8 H12 V10 H6 L3.6,12.2 V10 H1.6 Z" fill="#fff"/><path d="M3.4,4 H10.2 M3.4,6 H10.2 M3.4,8 H8" stroke="#2d2733" stroke-width=".9"/><circle cx="11.6" cy="11.6" r="4.6" fill="#2d2733" stroke="#e8e8e8" stroke-width=".9"/><text x="11.6" y="13.7" font-size="5.6" font-family="Liberation Sans" font-weight="bold" fill="#fff" text-anchor="middle">10</text></svg>
</div></body></html>
